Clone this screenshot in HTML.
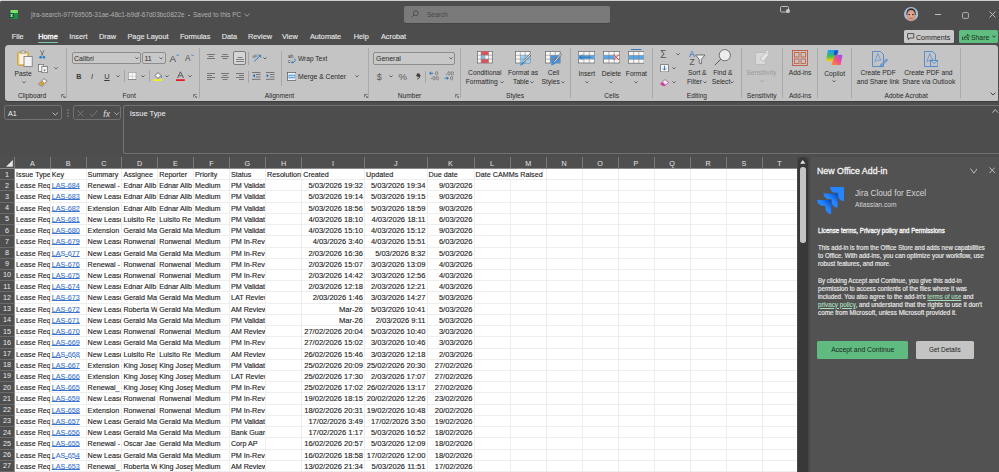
<!DOCTYPE html><html><head><meta charset="utf-8"><style>
html,body{margin:0;padding:0;}
body{width:999px;height:472px;overflow:hidden;position:relative;background:#4d4d4d;font-family:"Liberation Sans",sans-serif;}
.t{position:absolute;white-space:nowrap;}
.r{position:absolute;}
.c{position:absolute;overflow:hidden;white-space:nowrap;font-size:7.2px;line-height:11.22px;color:#1a1a1a;-webkit-text-stroke:0.12px #1a1a1a;}
</style></head><body>
<div class="r" style="left:0.00px;top:0.00px;width:999.00px;height:1.00px;background:#cfcfcf;"></div>
<svg class="r" style="left:0.00px;top:0.00px;width:3.00px;height:3.00px" viewBox="0 0 3 3"><path d="M0 0 H3 Q0 0 0 3Z" fill="#e6e6e6"/></svg>
<svg class="r" style="left:9.00px;top:9.50px;width:9.00px;height:9.50px" viewBox="0 0 9 9.5"><rect x="1.5" y="0" width="7.5" height="9.5" rx="1" fill="#1e8e47"/><rect x="1.5" y="0" width="7.5" height="3" rx="1" fill="#7fe36b"/><rect x="0" y="3" width="5" height="5" rx="0.8" fill="#0d5c2c"/><text x="2.5" y="7" font-size="4.5" fill="#fff" text-anchor="middle" font-family="Liberation Sans" font-weight="bold">x</text></svg>
<div class="t" style="left:31.20px;top:12.46px;font-size:6.90px;line-height:6.90px;color:#b0b0b0;transform:scaleX(0.9390);transform-origin:0 50%;">jira-search-97769505-31ae-48c1-b9df-67d03bc0822e</div>
<div class="r" style="left:188.40px;top:14.50px;width:1.80px;height:1.80px;background:#b0b0b0;border-radius:50%;"></div>
<div class="t" style="left:193.10px;top:12.46px;font-size:6.90px;line-height:6.90px;color:#b0b0b0;transform:scaleX(0.9399);transform-origin:0 50%;">Saved to this PC</div>
<svg class="r" style="left:244.00px;top:13.00px;width:6.00px;height:4.00px" viewBox="0 0 6 4"><path d="M0.5 0.8 L3 3.2 L5.5 0.8" stroke="#a9a9a9" stroke-width="0.9" fill="none"/></svg>
<div class="r" style="left:404.00px;top:5.70px;width:205.60px;height:17.20px;background:#7a7a7a;border-radius:2px;box-shadow:0 0.6px 0 #3f3f3f;"></div>
<svg class="r" style="left:410.50px;top:10.00px;width:8.00px;height:8.00px" viewBox="0 0 8 8"><circle cx="4.8" cy="3.2" r="2.4" stroke="#4a4a4a" stroke-width="0.9" fill="none"/><path d="M3.1 4.9 L0.8 7.2" stroke="#4a4a4a" stroke-width="0.9"/></svg>
<div class="t" style="left:427.00px;top:11.66px;font-size:6.90px;line-height:6.90px;color:#474747;transform:scaleX(0.9377);transform-origin:0 50%;">Search</div>
<svg class="r" style="left:780.00px;top:6.00px;width:10.00px;height:7.00px" viewBox="0 0 10 7"><rect x="0.5" y="0.5" width="8" height="5.5" rx="1" stroke="#c9c9c9" stroke-width="0.9" fill="none"/><circle cx="8" cy="5" r="2" fill="#c9c9c9"/></svg>
<svg class="r" style="left:903.90px;top:7.40px;width:14.20px;height:14.20px" viewBox="0 0 14.2 14.2"><defs><clipPath id="av"><circle cx="7.1" cy="7.1" r="7.1"/></clipPath><radialGradient id="avf" cx="0.5" cy="0.45" r="0.6"><stop offset="0" stop-color="#e6b09a"/><stop offset="1" stop-color="#c98a74"/></radialGradient></defs><circle cx="7.1" cy="7.1" r="7.1" fill="#a3c0de"/><g clip-path="url(#av)"><ellipse cx="7.1" cy="8.6" rx="4.5" ry="6.2" fill="url(#avf)"/><path d="M2.4 8 Q2 1.4 7.1 1.2 Q12.2 1.4 11.8 8 L11 8 Q11 3 7.1 3 Q3.2 3 3.2 8Z" fill="#3a2a24"/><ellipse cx="5.3" cy="7.6" rx="0.9" ry="0.6" fill="#2a1e1c"/><ellipse cx="8.9" cy="7.6" rx="0.9" ry="0.6" fill="#2a1e1c"/><ellipse cx="7.1" cy="11" rx="1.7" ry="0.6" fill="#b0625a"/></g></svg>
<div class="r" style="left:934.60px;top:14.00px;width:6.40px;height:0.80px;background:#bdbdbd;"></div>
<svg class="r" style="left:961.50px;top:11.50px;width:7.00px;height:7.00px" viewBox="0 0 7 7"><rect x="0.6" y="0.6" width="5.8" height="5.8" rx="1" stroke="#bdbdbd" stroke-width="0.9" fill="none"/></svg>
<svg class="r" style="left:988.50px;top:11.30px;width:7.00px;height:7.00px" viewBox="0 0 7 7"><path d="M0.5 0.5 L6.5 6.5 M6.5 0.5 L0.5 6.5" stroke="#c4c4c4" stroke-width="0.9"/></svg>
<div class="t" style="left:-82.30px;width:200px;text-align:center;top:33.11px;font-size:7.30px;line-height:7.30px;color:#e8e8e8;-webkit-text-stroke:0.12px #e8e8e8;">File</div>
<div class="t" style="left:-52.00px;width:200px;text-align:center;top:33.11px;font-size:7.30px;line-height:7.30px;color:#f0f0f0;-webkit-text-stroke:0.4px #f0f0f0;">Home</div>
<div class="t" style="left:-21.60px;width:200px;text-align:center;top:33.11px;font-size:7.30px;line-height:7.30px;color:#e8e8e8;-webkit-text-stroke:0.12px #e8e8e8;">Insert</div>
<div class="t" style="left:7.50px;width:200px;text-align:center;top:33.11px;font-size:7.30px;line-height:7.30px;color:#e8e8e8;-webkit-text-stroke:0.12px #e8e8e8;">Draw</div>
<div class="t" style="left:48.00px;width:200px;text-align:center;top:33.11px;font-size:7.30px;line-height:7.30px;color:#e8e8e8;-webkit-text-stroke:0.12px #e8e8e8;">Page Layout</div>
<div class="t" style="left:95.10px;width:200px;text-align:center;top:33.11px;font-size:7.30px;line-height:7.30px;color:#e8e8e8;-webkit-text-stroke:0.12px #e8e8e8;">Formulas</div>
<div class="t" style="left:129.35px;width:200px;text-align:center;top:33.11px;font-size:7.30px;line-height:7.30px;color:#e8e8e8;-webkit-text-stroke:0.12px #e8e8e8;">Data</div>
<div class="t" style="left:160.00px;width:200px;text-align:center;top:33.11px;font-size:7.30px;line-height:7.30px;color:#e8e8e8;-webkit-text-stroke:0.12px #e8e8e8;">Review</div>
<div class="t" style="left:189.95px;width:200px;text-align:center;top:33.11px;font-size:7.30px;line-height:7.30px;color:#e8e8e8;-webkit-text-stroke:0.12px #e8e8e8;">View</div>
<div class="t" style="left:225.50px;width:200px;text-align:center;top:33.11px;font-size:7.30px;line-height:7.30px;color:#e8e8e8;-webkit-text-stroke:0.12px #e8e8e8;">Automate</div>
<div class="t" style="left:261.30px;width:200px;text-align:center;top:33.11px;font-size:7.30px;line-height:7.30px;color:#e8e8e8;-webkit-text-stroke:0.12px #e8e8e8;">Help</div>
<div class="t" style="left:293.55px;width:200px;text-align:center;top:33.11px;font-size:7.30px;line-height:7.30px;color:#e8e8e8;-webkit-text-stroke:0.12px #e8e8e8;">Acrobat</div>
<div class="r" style="left:37.60px;top:41.90px;width:20.80px;height:1.20px;background:#7cc9a1;border-radius:1px;"></div>
<div class="r" style="left:903.80px;top:30.00px;width:50.10px;height:12.60px;background:#c8c8c8;border-radius:1.5px;"></div>
<svg class="r" style="left:907.00px;top:32.50px;width:7.50px;height:7.50px" viewBox="0 0 7.5 7.5"><path d="M0.6 0.6 H6.8 V5 H3 L1.4 6.6 V5 H0.6 Z" stroke="#333" stroke-width="0.8" fill="none"/></svg>
<div class="t" style="left:915.60px;top:33.61px;font-size:7.30px;line-height:7.30px;color:#262626;transform:scaleX(0.9691);transform-origin:0 50%;">Comments</div>
<div class="r" style="left:958.80px;top:30.00px;width:39.20px;height:12.60px;background:#5fbd7f;border-radius:1.5px;"></div>
<svg class="r" style="left:961.50px;top:32.50px;width:8.00px;height:7.50px" viewBox="0 0 8 7.5"><path d="M0.6 3.5 V7 H6.5 V5.5" stroke="#1f3a28" stroke-width="0.8" fill="none"/><path d="M2 5.5 Q2.5 2.5 5.5 2.5 V1 L7.5 3.2 L5.5 5.4 V4 Q3.5 4 2 5.5Z" stroke="#1f3a28" stroke-width="0.7" fill="none"/></svg>
<div class="t" style="left:970.60px;top:33.61px;font-size:7.30px;line-height:7.30px;color:#1b2f22;transform:scaleX(0.9344);transform-origin:0 50%;">Share</div>
<svg class="r" style="left:992.00px;top:35.00px;width:4.00px;height:3.00px" viewBox="0 0 4 3"><path d="M0.3 0.5 L2 2.3 L3.7 0.5" stroke="#1b2f22" stroke-width="0.8" fill="none"/></svg>
<div class="r" style="left:4.50px;top:44.50px;width:993.90px;height:56.70px;background:#c4c4c4;border-radius:3.5px 3.5px 1px 3px;box-shadow:0 0.8px 0 #383838;"></div>
<div class="r" style="left:66.30px;top:48.00px;width:0.90px;height:50.00px;background:#a9a9a9;"></div>
<div class="r" style="left:199.10px;top:48.00px;width:0.90px;height:50.00px;background:#a9a9a9;"></div>
<div class="r" style="left:368.40px;top:48.00px;width:0.90px;height:50.00px;background:#a9a9a9;"></div>
<div class="r" style="left:459.60px;top:48.00px;width:0.90px;height:50.00px;background:#a9a9a9;"></div>
<div class="r" style="left:570.30px;top:48.00px;width:0.90px;height:50.00px;background:#a9a9a9;"></div>
<div class="r" style="left:652.30px;top:48.00px;width:0.90px;height:50.00px;background:#a9a9a9;"></div>
<div class="r" style="left:740.50px;top:48.00px;width:0.90px;height:50.00px;background:#a9a9a9;"></div>
<div class="r" style="left:782.10px;top:48.00px;width:0.90px;height:50.00px;background:#a9a9a9;"></div>
<div class="r" style="left:817.20px;top:48.00px;width:0.90px;height:50.00px;background:#a9a9a9;"></div>
<div class="r" style="left:851.10px;top:48.00px;width:0.90px;height:50.00px;background:#a9a9a9;"></div>
<div class="r" style="left:960.10px;top:48.00px;width:0.90px;height:50.00px;background:#a9a9a9;"></div>
<div class="t" style="left:-67.90px;width:200px;text-align:center;top:92.68px;font-size:6.60px;line-height:6.60px;color:#2b2b2b;">Clipboard</div>
<svg class="r" style="left:61.00px;top:93.50px;width:4.50px;height:4.50px" viewBox="0 0 4.5 4.5"><path d="M0.4 3.5 V0.4 H3.5" stroke="#555" stroke-width="0.7" fill="none"/><path d="M1.3 1.3 L4 4 M4 2 V4 H2" stroke="#555" stroke-width="0.7" fill="none"/></svg>
<div class="t" style="left:29.15px;width:200px;text-align:center;top:92.68px;font-size:6.60px;line-height:6.60px;color:#2b2b2b;">Font</div>
<svg class="r" style="left:192.50px;top:93.50px;width:4.50px;height:4.50px" viewBox="0 0 4.5 4.5"><path d="M0.4 3.5 V0.4 H3.5" stroke="#555" stroke-width="0.7" fill="none"/><path d="M1.3 1.3 L4 4 M4 2 V4 H2" stroke="#555" stroke-width="0.7" fill="none"/></svg>
<div class="t" style="left:179.50px;width:200px;text-align:center;top:92.68px;font-size:6.60px;line-height:6.60px;color:#2b2b2b;">Alignment</div>
<svg class="r" style="left:363.50px;top:93.50px;width:4.50px;height:4.50px" viewBox="0 0 4.5 4.5"><path d="M0.4 3.5 V0.4 H3.5" stroke="#555" stroke-width="0.7" fill="none"/><path d="M1.3 1.3 L4 4 M4 2 V4 H2" stroke="#555" stroke-width="0.7" fill="none"/></svg>
<div class="t" style="left:309.55px;width:200px;text-align:center;top:92.68px;font-size:6.60px;line-height:6.60px;color:#2b2b2b;">Number</div>
<svg class="r" style="left:454.50px;top:93.50px;width:4.50px;height:4.50px" viewBox="0 0 4.5 4.5"><path d="M0.4 3.5 V0.4 H3.5" stroke="#555" stroke-width="0.7" fill="none"/><path d="M1.3 1.3 L4 4 M4 2 V4 H2" stroke="#555" stroke-width="0.7" fill="none"/></svg>
<div class="t" style="left:415.05px;width:200px;text-align:center;top:92.68px;font-size:6.60px;line-height:6.60px;color:#2b2b2b;">Styles</div>
<div class="t" style="left:511.70px;width:200px;text-align:center;top:92.68px;font-size:6.60px;line-height:6.60px;color:#2b2b2b;">Cells</div>
<div class="t" style="left:596.95px;width:200px;text-align:center;top:92.68px;font-size:6.60px;line-height:6.60px;color:#2b2b2b;">Editing</div>
<div class="t" style="left:661.70px;width:200px;text-align:center;top:92.68px;font-size:6.60px;line-height:6.60px;color:#2b2b2b;">Sensitivity</div>
<div class="t" style="left:700.10px;width:200px;text-align:center;top:92.68px;font-size:6.60px;line-height:6.60px;color:#2b2b2b;">Add-ins</div>
<div class="t" style="left:806.15px;width:200px;text-align:center;top:92.68px;font-size:6.60px;line-height:6.60px;color:#2b2b2b;">Adobe Acrobat</div>
<svg class="r" style="left:989.50px;top:91.50px;width:6.00px;height:4.00px" viewBox="0 0 6 4"><path d="M0.5 0.6 L3 3 L5.5 0.6" stroke="#333" stroke-width="0.9" fill="none"/></svg>
<svg class="r" style="left:16.50px;top:49.50px;width:16.00px;height:17.00px" viewBox="0 0 16 17"><rect x="0.8" y="2.2" width="10.5" height="13" rx="1" fill="#f2d48a" stroke="#c8961e" stroke-width="0.9"/><rect x="2.5" y="3.5" width="7" height="10.5" fill="#fbf3dd"/><path d="M3.5 3.2 L4.2 1.2 H5 Q6 -0.2 7 1.2 H7.8 L8.5 3.2Z" fill="#eee" stroke="#777" stroke-width="0.7"/><rect x="7" y="6.5" width="8.2" height="10" fill="#f4f4f4" stroke="#777" stroke-width="0.8"/></svg>
<div class="t" style="left:-76.95px;width:200px;text-align:center;top:70.84px;font-size:6.70px;line-height:6.70px;color:#2b2b2b;">Paste</div>
<svg class="r" style="left:21.50px;top:80.70px;width:4.00px;height:2.60px" viewBox="0 0 4 2.6"><path d="M0.4 0.4 L2 2 L3.6 0.4" stroke="#444" stroke-width="0.75" fill="none"/></svg>
<svg class="r" style="left:39.40px;top:49.60px;width:6.50px;height:9.00px" viewBox="0 0 6.5 9"><path d="M1.3 0.3 L4.2 5.6 M5.2 0.3 L2.3 5.6" stroke="#555" stroke-width="0.7"/><circle cx="1.6" cy="7.2" r="1.3" fill="#1f78c8"/><circle cx="4.9" cy="7.2" r="1.3" fill="#1f78c8"/></svg>
<svg class="r" style="left:38.00px;top:63.60px;width:10.00px;height:9.00px" viewBox="0 0 10 9"><rect x="0.5" y="0.5" width="5" height="7" fill="#f4f4f4" stroke="#666" stroke-width="0.7"/><rect x="3.8" y="2.5" width="5.5" height="6.2" fill="#f4f4f4" stroke="#666" stroke-width="0.7"/><path d="M6.5 5 V7.5 M5.3 6.2 H7.7" stroke="#555" stroke-width="0.5"/></svg>
<svg class="r" style="left:53.50px;top:67.30px;width:4.00px;height:2.60px" viewBox="0 0 4 2.6"><path d="M0.4 0.4 L2 2 L3.6 0.4" stroke="#444" stroke-width="0.75" fill="none"/></svg>
<svg class="r" style="left:38.20px;top:78.00px;width:9.50px;height:9.00px" viewBox="0 0 9.5 9"><path d="M6 0.5 L9 3.2 L4.2 8.3 L0.5 6.2Z" fill="#f4f4f4" stroke="#555" stroke-width="0.7"/><path d="M1.2 5.5 L4.6 2.8 L6.7 5 L4 7.8Z" fill="#d49a2a"/></svg>
<div class="r" style="left:71.70px;top:51.50px;width:69.00px;height:12.90px;background:#c8c8c8;border:0.8px solid #8d8d8d;border-radius:2px;box-sizing:border-box;"></div>
<div class="t" style="left:74.00px;top:55.22px;font-size:7.00px;line-height:7.00px;color:#2a2a2a;">Calibri</div>
<svg class="r" style="left:134.50px;top:56.90px;width:4.00px;height:2.60px" viewBox="0 0 4 2.6"><path d="M0.4 0.4 L2 2 L3.6 0.4" stroke="#444" stroke-width="0.75" fill="none"/></svg>
<div class="r" style="left:142.40px;top:51.50px;width:23.20px;height:12.90px;background:#c8c8c8;border:0.8px solid #8d8d8d;border-radius:2px;box-sizing:border-box;"></div>
<div class="t" style="left:144.50px;top:55.22px;font-size:7.00px;line-height:7.00px;color:#2a2a2a;">11</div>
<svg class="r" style="left:159.30px;top:56.90px;width:4.00px;height:2.60px" viewBox="0 0 4 2.6"><path d="M0.4 0.4 L2 2 L3.6 0.4" stroke="#444" stroke-width="0.75" fill="none"/></svg>
<div class="t" style="left:169.60px;top:53.51px;font-size:9.80px;line-height:9.80px;color:#4a4a4a;">A</div>
<svg class="r" style="left:176.00px;top:53.50px;width:3.50px;height:2.50px" viewBox="0 0 3.5 2.5"><path d="M0.3 2.2 L1.7 0.5 L3.1 2.2" stroke="#2f75c0" stroke-width="0.7" fill="none"/></svg>
<div class="t" style="left:185.00px;top:54.95px;font-size:8.20px;line-height:8.20px;color:#4a4a4a;">A</div>
<svg class="r" style="left:190.50px;top:53.50px;width:3.50px;height:2.50px" viewBox="0 0 3.5 2.5"><path d="M0.3 0.5 L1.7 2.2 L3.1 0.5" stroke="#2f75c0" stroke-width="0.7" fill="none"/></svg>
<div class="t" style="left:76.20px;top:72.75px;font-size:7.20px;line-height:7.20px;color:#3a3a3a;font-weight:bold;">B</div>
<div class="t" style="left:90.90px;top:72.63px;font-size:7.50px;line-height:7.50px;color:#3a3a3a;font-style:italic;font-family:"Liberation Serif",serif;">I</div>
<div class="t" style="left:104.20px;top:72.63px;font-size:7.50px;line-height:7.50px;color:#3a3a3a;text-decoration:underline;">U</div>
<svg class="r" style="left:116.00px;top:74.50px;width:4.00px;height:2.60px" viewBox="0 0 4 2.6"><path d="M0.4 0.4 L2 2 L3.6 0.4" stroke="#444" stroke-width="0.75" fill="none"/></svg>
<div class="r" style="left:124.20px;top:70.00px;width:0.80px;height:12.00px;background:#a5a5a5;"></div>
<svg class="r" style="left:128.00px;top:71.50px;width:8.50px;height:8.50px" viewBox="0 0 8.5 8.5"><rect x="0.5" y="0.5" width="7.5" height="7.5" fill="#f6f6f6" stroke="#9a9a9a" stroke-width="0.6"/><path d="M4.25 0.5 V8 M0.5 4.25 H8" stroke="#b9b9b9" stroke-width="0.5"/><path d="M0.3 8 H8.2" stroke="#444" stroke-width="1"/></svg>
<svg class="r" style="left:140.80px;top:74.50px;width:4.00px;height:2.60px" viewBox="0 0 4 2.6"><path d="M0.4 0.4 L2 2 L3.6 0.4" stroke="#444" stroke-width="0.75" fill="none"/></svg>
<div class="r" style="left:148.60px;top:70.00px;width:0.80px;height:12.00px;background:#a5a5a5;"></div>
<svg class="r" style="left:152.60px;top:70.50px;width:9.50px;height:10.50px" viewBox="0 0 9.5 10.5"><path d="M2 4.5 L5 1.5 L8 4.5 L5 7.5Z" fill="#f4f4f4" stroke="#444" stroke-width="0.7"/><path d="M8.2 4.8 Q9 6.5 8.2 7" stroke="#2f75c0" stroke-width="0.8" fill="none"/><rect x="0" y="8.2" width="9.2" height="1.9" fill="#f5ec18"/></svg>
<svg class="r" style="left:165.30px;top:74.50px;width:4.00px;height:2.60px" viewBox="0 0 4 2.6"><path d="M0.4 0.4 L2 2 L3.6 0.4" stroke="#444" stroke-width="0.75" fill="none"/></svg>
<svg class="r" style="left:175.50px;top:70.50px;width:9.00px;height:10.50px" viewBox="0 0 9 10.5"><path d="M1.5 7 L4.5 0.8 L7.5 7 M2.7 4.8 H6.3" stroke="#444" stroke-width="0.8" fill="none"/><rect x="0" y="8.2" width="8.8" height="1.9" fill="#e51c23"/></svg>
<svg class="r" style="left:188.40px;top:74.50px;width:4.00px;height:2.60px" viewBox="0 0 4 2.6"><path d="M0.4 0.4 L2 2 L3.6 0.4" stroke="#444" stroke-width="0.75" fill="none"/></svg>
<svg class="r" style="left:206.70px;top:53.50px;width:9.00px;height:7.30px" viewBox="0 0 9 7.300000000000001"><rect x="0" y="0.0" width="8" height="0.7" fill="#555"/><rect x="1.5" y="2.1" width="5" height="0.7" fill="#555"/><rect x="0" y="4.2" width="8" height="0.7" fill="#555"/></svg>
<svg class="r" style="left:221.00px;top:53.50px;width:9.00px;height:7.30px" viewBox="0 0 9 7.300000000000001"><rect x="1.5" y="0.0" width="5" height="0.7" fill="#555"/><rect x="0" y="2.1" width="8" height="0.7" fill="#555"/><rect x="1.5" y="4.2" width="5" height="0.7" fill="#555"/></svg>
<div class="r" style="left:233.20px;top:51.40px;width:13.20px;height:13.70px;background:#d6d6d6;border:0.8px solid #7d7d7d;border-radius:2px;box-sizing:border-box;"></div>
<svg class="r" style="left:235.80px;top:56.50px;width:9.00px;height:7.30px" viewBox="0 0 9 7.300000000000001"><rect x="1.5" y="0.0" width="5" height="0.7" fill="#555"/><rect x="0" y="2.1" width="8" height="0.7" fill="#555"/><rect x="0" y="4.2" width="8" height="0.7" fill="#555"/></svg>
<div class="r" style="left:248.40px;top:52.00px;width:0.80px;height:13.00px;background:#a5a5a5;"></div>
<div class="r" style="left:280.80px;top:51.00px;width:0.80px;height:34.50px;background:#a9a9a9;"></div>
<svg class="r" style="left:251.80px;top:52.50px;width:10.00px;height:10.00px" viewBox="0 0 10 10"><text x="0.5" y="4.5" font-size="4.5" fill="#555" font-family="Liberation Sans" transform="rotate(-20 3 4)">ab</text><path d="M2 8.5 L8.5 2.5" stroke="#1f6fc0" stroke-width="0.9"/><path d="M6.2 2.2 H8.8 V4.8" stroke="#1f6fc0" stroke-width="0.8" fill="none"/></svg>
<svg class="r" style="left:263.30px;top:57.20px;width:4.00px;height:2.60px" viewBox="0 0 4 2.6"><path d="M0.4 0.4 L2 2 L3.6 0.4" stroke="#444" stroke-width="0.75" fill="none"/></svg>
<svg class="r" style="left:206.70px;top:72.50px;width:9.00px;height:9.00px" viewBox="0 0 9 9.0"><rect x="0" y="0.0" width="8" height="0.7" fill="#555"/><rect x="0" y="2.0" width="5" height="0.7" fill="#555"/><rect x="0" y="4.0" width="8" height="0.7" fill="#555"/><rect x="0" y="6.0" width="5" height="0.7" fill="#555"/></svg>
<svg class="r" style="left:221.00px;top:72.50px;width:9.00px;height:9.00px" viewBox="0 0 9 9.0"><rect x="0" y="0.0" width="8" height="0.7" fill="#555"/><rect x="1.5" y="2.0" width="5" height="0.7" fill="#555"/><rect x="0" y="4.0" width="8" height="0.7" fill="#555"/><rect x="1.5" y="6.0" width="5" height="0.7" fill="#555"/></svg>
<svg class="r" style="left:235.50px;top:72.50px;width:9.00px;height:9.00px" viewBox="0 0 9 9.0"><rect x="0" y="0.0" width="8" height="0.7" fill="#555"/><rect x="3" y="2.0" width="5" height="0.7" fill="#555"/><rect x="0" y="4.0" width="8" height="0.7" fill="#555"/><rect x="3" y="6.0" width="5" height="0.7" fill="#555"/></svg>
<div class="r" style="left:247.50px;top:71.00px;width:0.80px;height:12.00px;background:#a5a5a5;"></div>
<svg class="r" style="left:251.80px;top:72.00px;width:9.00px;height:8.00px" viewBox="0 0 9 8"><rect x="0" y="0" width="8.5" height="0.7" fill="#555"/><rect x="4" y="2.3" width="4.5" height="0.7" fill="#555"/><rect x="4" y="4.6" width="4.5" height="0.7" fill="#555"/><rect x="0" y="6.9" width="8.5" height="0.7" fill="#555"/><path d="M3 2 L0.6 3.8 L3 5.6Z" fill="#1f6fc0"/></svg>
<svg class="r" style="left:266.20px;top:72.00px;width:9.00px;height:8.00px" viewBox="0 0 9 8"><rect x="0" y="0" width="8.5" height="0.7" fill="#555"/><rect x="4" y="2.3" width="4.5" height="0.7" fill="#555"/><rect x="4" y="4.6" width="4.5" height="0.7" fill="#555"/><rect x="0" y="6.9" width="8.5" height="0.7" fill="#555"/><path d="M0.6 2 L3 3.8 L0.6 5.6Z" fill="#1f6fc0"/></svg>
<svg class="r" style="left:287.80px;top:53.50px;width:9.00px;height:10.00px" viewBox="0 0 9 10"><text x="0" y="4" font-size="4.8" fill="#444" font-family="Liberation Sans">ab</text><text x="0" y="9" font-size="4.8" fill="#444" font-family="Liberation Sans">c</text><path d="M6.5 4.5 Q8.5 6.5 6 8.3 H3.5" stroke="#1f6fc0" stroke-width="0.8" fill="none"/><path d="M4.8 7.2 L3.4 8.3 L4.8 9.4" stroke="#1f6fc0" stroke-width="0.7" fill="none"/></svg>
<div class="t" style="left:298.00px;top:56.19px;font-size:6.59px;line-height:6.59px;color:#2a2a2a;">Wrap Text</div>
<svg class="r" style="left:286.90px;top:71.70px;width:9.50px;height:9.00px" viewBox="0 0 9.5 9"><rect x="0.4" y="0.4" width="8.6" height="8.2" fill="#eaf2fb" stroke="#555" stroke-width="0.7"/><rect x="1.5" y="2.7" width="6.4" height="3.6" fill="#5aa0e6"/><path d="M2.5 4.5 H7 M3.3 3.6 L2.4 4.5 L3.3 5.4 M6.1 3.6 L7 4.5 L6.1 5.4" stroke="#fff" stroke-width="0.6" fill="none"/></svg>
<div class="t" style="left:298.00px;top:73.50px;font-size:6.80px;line-height:6.80px;color:#2a2a2a;">Merge &amp; Center</div>
<svg class="r" style="left:355.20px;top:75.10px;width:4.00px;height:2.60px" viewBox="0 0 4 2.6"><path d="M0.4 0.4 L2 2 L3.6 0.4" stroke="#444" stroke-width="0.75" fill="none"/></svg>
<div class="r" style="left:373.30px;top:51.50px;width:81.40px;height:13.10px;background:#c8c8c8;border:0.8px solid #8d8d8d;border-radius:2px;box-sizing:border-box;"></div>
<div class="t" style="left:376.00px;top:55.22px;font-size:7.00px;line-height:7.00px;color:#2a2a2a;">General</div>
<svg class="r" style="left:449.30px;top:56.90px;width:4.00px;height:2.60px" viewBox="0 0 4 2.6"><path d="M0.4 0.4 L2 2 L3.6 0.4" stroke="#444" stroke-width="0.75" fill="none"/></svg>
<div class="t" style="left:376.80px;top:72.73px;font-size:9.00px;line-height:9.00px;color:#5a5a5a;">$</div>
<svg class="r" style="left:388.50px;top:75.20px;width:4.00px;height:2.60px" viewBox="0 0 4 2.6"><path d="M0.4 0.4 L2 2 L3.6 0.4" stroke="#444" stroke-width="0.75" fill="none"/></svg>
<div class="t" style="left:398.60px;top:72.49px;font-size:9.60px;line-height:9.60px;color:#606060;">%</div>
<svg class="r" style="left:416.20px;top:73.30px;width:4.50px;height:6.50px" viewBox="0 0 4.5 6.5"><circle cx="2.3" cy="2.2" r="1.9" fill="#444"/><path d="M4 2.5 Q4 5.2 1.2 6.2" stroke="#444" stroke-width="1" fill="none"/></svg>
<div class="r" style="left:425.20px;top:70.50px;width:0.80px;height:12.50px;background:#a5a5a5;"></div>
<svg class="r" style="left:429.30px;top:71.30px;width:10.00px;height:9.50px" viewBox="0 0 10 9.5"><path d="M4.2 2.3 H0.8 M2.2 0.9 L0.7 2.3 L2.2 3.7" stroke="#1f6fc0" stroke-width="0.9" fill="none"/><ellipse cx="7.6" cy="2.3" rx="1.15" ry="1.75" fill="none" stroke="#666" stroke-width="0.65"/><circle cx="2.6" cy="7.6" r="0.5" fill="#666"/><ellipse cx="5.0" cy="7.2" rx="1.15" ry="1.75" fill="none" stroke="#666" stroke-width="0.65"/><ellipse cx="8.3" cy="7.2" rx="1.15" ry="1.75" fill="none" stroke="#666" stroke-width="0.65"/></svg>
<svg class="r" style="left:443.90px;top:71.30px;width:10.00px;height:9.50px" viewBox="0 0 10 9.5"><ellipse cx="5.0" cy="2.3" rx="1.15" ry="1.75" fill="none" stroke="#666" stroke-width="0.65"/><ellipse cx="8.3" cy="2.3" rx="1.15" ry="1.75" fill="none" stroke="#666" stroke-width="0.65"/><circle cx="2.6" cy="3.6" r="0.5" fill="#666"/><path d="M0.6 7.2 H4.2 M2.8 5.8 L4.3 7.2 L2.8 8.6" stroke="#1f6fc0" stroke-width="0.9" fill="none"/><ellipse cx="7.6" cy="7.2" rx="1.15" ry="1.75" fill="none" stroke="#666" stroke-width="0.65"/></svg>
<svg class="r" style="left:477.20px;top:51.20px;width:15.70px;height:12.40px" viewBox="0 0 15.7 12.4"><rect x="0.4" y="0.4" width="14.899999999999999" height="11.6" fill="#f7f7f7" stroke="#666" stroke-width="0.7"/><rect x="4.125" y="0.4" width="7.449999999999999" height="3.8666666666666667" fill="#e2505a"/><rect x="4.125" y="4.266666666666667" width="3.7249999999999996" height="3.8666666666666667" fill="#7cc0ee"/><rect x="7.85" y="4.266666666666667" width="3.7249999999999996" height="3.8666666666666667" fill="#f5f5f5"/><rect x="4.125" y="8.133333333333333" width="7.449999999999999" height="3.8666666666666667" fill="#e2505a"/><path d="M4.125 0.4 V12.0" stroke="#777" stroke-width="0.5"/><path d="M7.85 0.4 V12.0" stroke="#777" stroke-width="0.5"/><path d="M11.575 0.4 V12.0" stroke="#777" stroke-width="0.5"/><path d="M0.4 4.266666666666667 H15.299999999999999" stroke="#777" stroke-width="0.5"/><path d="M0.4 8.133333333333333 H15.299999999999999" stroke="#777" stroke-width="0.5"/></svg>
<div class="t" style="left:384.85px;width:200px;text-align:center;top:70.24px;font-size:6.70px;line-height:6.70px;color:#2a2a2a;">Conditional</div>
<div class="t" style="left:381.65px;width:200px;text-align:center;top:79.44px;font-size:6.70px;line-height:6.70px;color:#2a2a2a;">Formatting</div>
<svg class="r" style="left:500.00px;top:80.70px;width:4.00px;height:2.60px" viewBox="0 0 4 2.6"><path d="M0.4 0.4 L2 2 L3.6 0.4" stroke="#444" stroke-width="0.75" fill="none"/></svg>
<svg class="r" style="left:515.40px;top:51.20px;width:17.00px;height:15.00px" viewBox="0 0 17 15"><rect x="0.4" y="0.4" width="14.7" height="11.6" fill="#f7f7f7" stroke="#666" stroke-width="0.7"/><rect x="5.3" y="4.266666666666667" width="9.799999999999999" height="7.733333333333333" fill="#9cd0f5"/><path d="M5.3 0.4 V12.0" stroke="#777" stroke-width="0.5"/><path d="M10.2 0.4 V12.0" stroke="#777" stroke-width="0.5"/><path d="M0.4 4.266666666666667 H15.1" stroke="#777" stroke-width="0.5"/><path d="M0.4 8.133333333333333 H15.1" stroke="#777" stroke-width="0.5"/><path d="M15.5 3.5 L8 11.5" stroke="#555" stroke-width="1.8"/><path d="M15.5 3.5 L8 11.5" stroke="#f4f4f4" stroke-width="1"/><path d="M8.3 10.8 Q6 11 5 14.5 Q8.5 14 9.5 12Z" fill="#3b8fd9"/></svg>
<div class="t" style="left:423.10px;width:200px;text-align:center;top:70.24px;font-size:6.70px;line-height:6.70px;color:#2a2a2a;">Format as</div>
<div class="t" style="left:421.05px;width:200px;text-align:center;top:79.44px;font-size:6.70px;line-height:6.70px;color:#2a2a2a;">Table</div>
<svg class="r" style="left:529.50px;top:80.70px;width:4.00px;height:2.60px" viewBox="0 0 4 2.6"><path d="M0.4 0.4 L2 2 L3.6 0.4" stroke="#444" stroke-width="0.75" fill="none"/></svg>
<svg class="r" style="left:545.30px;top:51.20px;width:17.50px;height:15.00px" viewBox="0 0 17.5 15"><rect x="0.4" y="0.4" width="14.7" height="11.6" fill="#f7f7f7" stroke="#666" stroke-width="0.7"/><rect x="5.3" y="4.266666666666667" width="9.799999999999999" height="7.733333333333333" fill="#4a93dc"/><path d="M5.3 0.4 V12.0" stroke="#777" stroke-width="0.5"/><path d="M10.2 0.4 V12.0" stroke="#777" stroke-width="0.5"/><path d="M0.4 4.266666666666667 H15.1" stroke="#777" stroke-width="0.5"/><path d="M0.4 8.133333333333333 H15.1" stroke="#777" stroke-width="0.5"/><path d="M16.5 2.5 L9 11.5" stroke="#555" stroke-width="1.8"/><path d="M16.5 2.5 L9 11.5" stroke="#f4f4f4" stroke-width="1"/><path d="M9.3 10.8 Q7 11 6 14.5 Q9.5 14 10.5 12Z" fill="#3b8fd9"/></svg>
<div class="t" style="left:453.50px;width:200px;text-align:center;top:70.24px;font-size:6.70px;line-height:6.70px;color:#2a2a2a;">Cell</div>
<div class="t" style="left:450.70px;width:200px;text-align:center;top:79.44px;font-size:6.70px;line-height:6.70px;color:#2a2a2a;">Styles</div>
<svg class="r" style="left:560.50px;top:80.70px;width:4.00px;height:2.60px" viewBox="0 0 4 2.6"><path d="M0.4 0.4 L2 2 L3.6 0.4" stroke="#444" stroke-width="0.75" fill="none"/></svg>
<svg class="r" style="left:578.30px;top:51.20px;width:17.20px;height:12.40px" viewBox="0 0 17.2 12.4"><rect x="0.4" y="0.4" width="16.4" height="11.6" fill="#f7f7f7" stroke="#666" stroke-width="0.7"/><rect x="0.4" y="4.266666666666667" width="16.4" height="3.8666666666666667" fill="#5aa7e8"/><path d="M5.866666666666666 0.4 V12.0" stroke="#777" stroke-width="0.5"/><path d="M11.333333333333332 0.4 V12.0" stroke="#777" stroke-width="0.5"/><path d="M0.4 4.266666666666667 H16.8" stroke="#777" stroke-width="0.5"/><path d="M0.4 8.133333333333333 H16.8" stroke="#777" stroke-width="0.5"/><path d="M13 6.2 H2 M4.5 3.9 L1.5 6.2 L4.5 8.5" stroke="#1f6fc0" stroke-width="0.9" fill="none"/></svg>
<div class="t" style="left:486.80px;width:200px;text-align:center;top:70.84px;font-size:6.70px;line-height:6.70px;color:#2a2a2a;">Insert</div>
<svg class="r" style="left:584.70px;top:80.70px;width:4.00px;height:2.60px" viewBox="0 0 4 2.6"><path d="M0.4 0.4 L2 2 L3.6 0.4" stroke="#444" stroke-width="0.75" fill="none"/></svg>
<svg class="r" style="left:603.10px;top:51.20px;width:17.20px;height:12.40px" viewBox="0 0 17.2 12.4"><rect x="0.4" y="0.4" width="16.4" height="11.6" fill="#f7f7f7" stroke="#666" stroke-width="0.7"/><rect x="0.4" y="4.266666666666667" width="10.933333333333332" height="3.8666666666666667" fill="#5aa7e8"/><path d="M5.866666666666666 0.4 V12.0" stroke="#777" stroke-width="0.5"/><path d="M11.333333333333332 0.4 V12.0" stroke="#777" stroke-width="0.5"/><path d="M0.4 4.266666666666667 H16.8" stroke="#777" stroke-width="0.5"/><path d="M0.4 8.133333333333333 H16.8" stroke="#777" stroke-width="0.5"/><path d="M10.5 3.5 L16 9 M16 3.5 L10.5 9" stroke="#d64545" stroke-width="1"/></svg>
<div class="t" style="left:511.40px;width:200px;text-align:center;top:70.84px;font-size:6.70px;line-height:6.70px;color:#2a2a2a;">Delete</div>
<svg class="r" style="left:609.40px;top:80.70px;width:4.00px;height:2.60px" viewBox="0 0 4 2.6"><path d="M0.4 0.4 L2 2 L3.6 0.4" stroke="#444" stroke-width="0.75" fill="none"/></svg>
<svg class="r" style="left:627.90px;top:49.00px;width:16.50px;height:14.60px" viewBox="0 0 16.5 14.6"><path d="M3 0.5 H13.5" stroke="#1f6fc0" stroke-width="0.9"/><g transform="translate(0 2.2)"><rect x="0.4" y="0.4" width="15.7" height="11.6" fill="#f7f7f7" stroke="#666" stroke-width="0.7"/><rect x="0.4" y="4.266666666666667" width="15.7" height="3.8666666666666667" fill="#5aa7e8"/><path d="M5.633333333333334 0.4 V12.0" stroke="#777" stroke-width="0.5"/><path d="M10.866666666666667 0.4 V12.0" stroke="#777" stroke-width="0.5"/><path d="M0.4 4.266666666666667 H16.1" stroke="#777" stroke-width="0.5"/><path d="M0.4 8.133333333333333 H16.1" stroke="#777" stroke-width="0.5"/></g></svg>
<div class="t" style="left:536.40px;width:200px;text-align:center;top:70.84px;font-size:6.70px;line-height:6.70px;color:#2a2a2a;">Format</div>
<svg class="r" style="left:634.20px;top:80.70px;width:4.00px;height:2.60px" viewBox="0 0 4 2.6"><path d="M0.4 0.4 L2 2 L3.6 0.4" stroke="#444" stroke-width="0.75" fill="none"/></svg>
<div class="t" style="left:660.30px;top:50.03px;font-size:10.00px;line-height:10.00px;color:#555;">&#931;</div>
<svg class="r" style="left:675.50px;top:52.90px;width:4.00px;height:2.60px" viewBox="0 0 4 2.6"><path d="M0.4 0.4 L2 2 L3.6 0.4" stroke="#444" stroke-width="0.75" fill="none"/></svg>
<svg class="r" style="left:659.70px;top:64.20px;width:9.00px;height:8.30px" viewBox="0 0 9 8.3"><rect x="0.4" y="0.4" width="8.2" height="7.5" rx="0.8" fill="#f4f4f4" stroke="#555" stroke-width="0.7"/><path d="M4.5 1.8 V6 M2.8 4.4 L4.5 6.1 L6.2 4.4" stroke="#1f6fc0" stroke-width="0.9" fill="none"/></svg>
<svg class="r" style="left:671.70px;top:67.00px;width:4.00px;height:2.60px" viewBox="0 0 4 2.6"><path d="M0.4 0.4 L2 2 L3.6 0.4" stroke="#444" stroke-width="0.75" fill="none"/></svg>
<svg class="r" style="left:659.70px;top:78.90px;width:9.00px;height:7.60px" viewBox="0 0 9 7.6"><path d="M0.5 5 L5 0.5 L8.5 3.5 L4 7.3Z" fill="#f4f4f4" stroke="#b52f89" stroke-width="0.7"/><path d="M0.5 5 L2.6 3 L5.6 5.8 L4 7.3Z" fill="#d0399e"/></svg>
<svg class="r" style="left:671.70px;top:81.40px;width:4.00px;height:2.60px" viewBox="0 0 4 2.6"><path d="M0.4 0.4 L2 2 L3.6 0.4" stroke="#444" stroke-width="0.75" fill="none"/></svg>
<svg class="r" style="left:688.80px;top:50.30px;width:17.00px;height:15.50px" viewBox="0 0 17 15.5"><text x="0" y="7" font-size="8.5" fill="#1f6fc0" font-family="Liberation Sans">A</text><text x="0.4" y="15.2" font-size="8.5" fill="#555" font-family="Liberation Sans">Z</text><path d="M6.5 5 H16 L12.3 9.3 V14 L10.2 13 V9.3Z" fill="#f2f2f2" stroke="#555" stroke-width="0.8"/></svg>
<div class="t" style="left:597.30px;width:200px;text-align:center;top:70.14px;font-size:6.70px;line-height:6.70px;color:#2a2a2a;">Sort &amp;</div>
<div class="t" style="left:594.45px;width:200px;text-align:center;top:79.44px;font-size:6.70px;line-height:6.70px;color:#2a2a2a;">Filter</div>
<svg class="r" style="left:703.00px;top:80.70px;width:4.00px;height:2.60px" viewBox="0 0 4 2.6"><path d="M0.4 0.4 L2 2 L3.6 0.4" stroke="#444" stroke-width="0.75" fill="none"/></svg>
<svg class="r" style="left:714.40px;top:49.20px;width:17.00px;height:17.00px" viewBox="0 0 17 17"><circle cx="10.8" cy="6.2" r="5.6" fill="#ececec" stroke="#555" stroke-width="0.8"/><path d="M6.8 10.2 L0.8 16.2" stroke="#555" stroke-width="0.9"/></svg>
<div class="t" style="left:622.85px;width:200px;text-align:center;top:70.14px;font-size:6.70px;line-height:6.70px;color:#2a2a2a;">Find &amp;</div>
<div class="t" style="left:621.00px;width:200px;text-align:center;top:79.44px;font-size:6.70px;line-height:6.70px;color:#2a2a2a;">Select</div>
<svg class="r" style="left:730.30px;top:80.70px;width:4.00px;height:2.60px" viewBox="0 0 4 2.6"><path d="M0.4 0.4 L2 2 L3.6 0.4" stroke="#444" stroke-width="0.75" fill="none"/></svg>
<svg class="r" style="left:755.30px;top:49.20px;width:15.50px;height:16.00px" viewBox="0 0 15.5 16"><rect x="0.5" y="3.5" width="10" height="12" rx="1" fill="#d9d9d9" stroke="#b3b3b3" stroke-width="0.7"/><path d="M5 10 L11 2.5 L14.5 5 L8.5 12.5Z" fill="#e4e4e4" stroke="#b3b3b3" stroke-width="0.7"/><circle cx="12.3" cy="2.8" r="1.6" fill="#e4e4e4" stroke="#b3b3b3" stroke-width="0.6"/></svg>
<div class="t" style="left:661.30px;width:200px;text-align:center;top:70.14px;font-size:6.70px;line-height:6.70px;color:#9a9a9a;">Sensitivity</div>
<svg class="r" style="left:759.70px;top:80.40px;width:4.00px;height:2.60px" viewBox="0 0 4 2.6"><path d="M0.4 0.4 L2 2 L3.6 0.4" stroke="#9a9a9a" stroke-width="0.75" fill="none"/></svg>
<svg class="r" style="left:792.10px;top:49.70px;width:16.00px;height:16.00px" viewBox="0 0 16 16"><rect x="0.5" y="0.5" width="15" height="15" fill="none" stroke="#c5573a" stroke-width="0.9"/><rect x="2.5" y="2.5" width="4.5" height="4.5" fill="none" stroke="#c5573a" stroke-width="0.8"/><rect x="9" y="2.5" width="4.5" height="4.5" fill="none" stroke="#c5573a" stroke-width="0.8"/><rect x="2.5" y="9" width="4.5" height="4.5" fill="none" stroke="#c5573a" stroke-width="0.8"/><rect x="9" y="9" width="4.5" height="4.5" fill="none" stroke="#c5573a" stroke-width="0.8"/></svg>
<div class="t" style="left:700.10px;width:200px;text-align:center;top:70.14px;font-size:6.70px;line-height:6.70px;color:#2a2a2a;">Add-ins</div>
<svg class="r" style="left:826.40px;top:49.70px;width:16.60px;height:15.40px" viewBox="0 0 355 330"><defs><linearGradient id="cpl" x1="0" y1="0" x2="0" y2="1"><stop offset="0" stop-color="#1e9ff2"/><stop offset="0.55" stop-color="#3cbf5a"/><stop offset="1" stop-color="#f5c816"/></linearGradient><linearGradient id="cpr" x1="1" y1="0" x2="0" y2="1"><stop offset="0" stop-color="#a24ef0"/><stop offset="0.5" stop-color="#f0508a"/><stop offset="1" stop-color="#fb8a2e"/></linearGradient></defs><path d="M55 20 L250 20 L190 225 L20 225 Z" fill="url(#cpl)" stroke="url(#cpl)" stroke-width="36" stroke-linejoin="round"/><path d="M190 20 L250 20 L225 100 L175 100 Z" fill="#1f3fd0" stroke="#1f3fd0" stroke-width="20" stroke-linejoin="round" opacity="0.85"/><path d="M215 118 L335 118 L295 310 L135 310 Z" fill="url(#cpr)" stroke="url(#cpr)" stroke-width="36" stroke-linejoin="round"/></svg>
<div class="t" style="left:734.60px;width:200px;text-align:center;top:71.04px;font-size:6.70px;line-height:6.70px;color:#2a2a2a;">Copilot</div>
<svg class="r" style="left:832.30px;top:80.30px;width:4.00px;height:2.60px" viewBox="0 0 4 2.6"><path d="M0.4 0.4 L2 2 L3.6 0.4" stroke="#444" stroke-width="0.75" fill="none"/></svg>
<svg class="r" style="left:872.10px;top:50.80px;width:15.50px;height:16.00px" viewBox="0 0 15.5 16"><path d="M0.5 0.5 H8.5 L11.5 3.5 V15.5 H0.5Z" fill="none" stroke="#3f7fd0" stroke-width="0.8"/><path d="M3 10 Q5 4 6 2.5 Q6.5 6 9 9 Q5 8.5 2.5 11" stroke="#3f7fd0" stroke-width="0.6" fill="none"/><path d="M9 14.5 L14.5 9" stroke="#3f7fd0" stroke-width="2.2" stroke-linecap="round"/><path d="M9 14.5 L14.5 9" stroke="#c4c4c4" stroke-width="0.9" stroke-linecap="round"/></svg>
<div class="t" style="left:778.10px;width:200px;text-align:center;top:70.14px;font-size:6.70px;line-height:6.70px;color:#2a2a2a;">Create PDF</div>
<div class="t" style="left:778.10px;width:200px;text-align:center;top:79.34px;font-size:6.70px;line-height:6.70px;color:#2a2a2a;">and Share link</div>
<svg class="r" style="left:923.70px;top:50.80px;width:14.50px;height:16.00px" viewBox="0 0 14.5 16"><path d="M0.5 0.5 H8.5 L11.5 3.5 V15.5 H0.5Z" fill="none" stroke="#3f7fd0" stroke-width="0.8"/><path d="M3 10 Q5 4 6 2.5 Q6.5 6 9 9 Q5 8.5 2.5 11" stroke="#3f7fd0" stroke-width="0.6" fill="none"/><rect x="6.5" y="9.5" width="7.5" height="6" fill="#c4c4c4" stroke="#3f7fd0" stroke-width="0.8"/><path d="M6.8 9.8 L10.2 12.5 L13.7 9.8" stroke="#3f7fd0" stroke-width="0.7" fill="none"/></svg>
<div class="t" style="left:828.45px;width:200px;text-align:center;top:70.14px;font-size:6.70px;line-height:6.70px;color:#2a2a2a;">Create PDF and</div>
<div class="t" style="left:828.75px;width:200px;text-align:center;top:79.34px;font-size:6.70px;line-height:6.70px;color:#2a2a2a;">Share via Outlook</div>
<div class="r" style="left:4.00px;top:105.20px;width:57.70px;height:14.40px;background:transparent;border:0.8px solid #727272;border-radius:2.5px;box-sizing:border-box;"></div>
<div class="t" style="left:8.00px;top:110.35px;font-size:7.19px;line-height:7.19px;color:#f2f2f2;">A1</div>
<svg class="r" style="left:52.00px;top:111.50px;width:6.50px;height:4.00px" viewBox="0 0 6.5 4"><path d="M0.5 0.5 L3.2 3.2 L6 0.5" stroke="#d0d0d0" stroke-width="0.8" fill="none"/></svg>
<svg class="r" style="left:66.50px;top:108.50px;width:2.00px;height:8.00px" viewBox="0 0 2 8"><circle cx="1" cy="1" r="0.6" fill="#cfcfcf"/><circle cx="1" cy="4" r="0.6" fill="#cfcfcf"/><circle cx="1" cy="7" r="0.6" fill="#cfcfcf"/></svg>
<div class="r" style="left:72.90px;top:105.20px;width:48.00px;height:14.40px;background:transparent;border:0.8px solid #727272;border-radius:2.5px;box-sizing:border-box;"></div>
<svg class="r" style="left:76.60px;top:109.50px;width:7.00px;height:7.00px" viewBox="0 0 7 7"><path d="M0.5 0.5 L6.5 6.5 M6.5 0.5 L0.5 6.5" stroke="#8a8a8a" stroke-width="0.7"/></svg>
<svg class="r" style="left:88.90px;top:109.50px;width:9.00px;height:7.00px" viewBox="0 0 9 7"><path d="M0.5 3.8 L3.2 6.5 L8.5 0.5" stroke="#8a8a8a" stroke-width="0.7" fill="none"/></svg>
<div class="t" style="left:103.30px;top:109.63px;font-size:8.50px;line-height:8.50px;color:#e0e0e0;font-style:italic;font-family:"Liberation Serif",serif;">fx</div>
<svg class="r" style="left:114.00px;top:111.80px;width:5.50px;height:3.50px" viewBox="0 0 5.5 3.5"><path d="M0.4 0.4 L2.75 2.9 L5.1 0.4" stroke="#cfcfcf" stroke-width="0.7" fill="none"/></svg>
<div class="r" style="left:123.30px;top:105.20px;width:876.20px;height:49.00px;background:transparent;border:0.8px solid #727272;border-right:none;border-radius:2.5px 0 0 2.5px;box-sizing:border-box;"></div>
<div class="t" style="left:129.70px;top:110.24px;font-size:7.47px;line-height:7.47px;color:#f2f2f2;">Issue Type</div>
<svg class="r" style="left:992.20px;top:109.20px;width:6.40px;height:4.00px" viewBox="0 0 6.4 4"><path d="M0.4 3.6 L3.2 0.6 L6 3.6" stroke="#d4d4d4" stroke-width="0.9" fill="none"/></svg>
<div class="r" style="left:0.00px;top:157.40px;width:797.00px;height:11.10px;background:#4f4f4f;"></div>
<div class="r" style="left:0.00px;top:168.50px;width:14.50px;height:303.50px;background:#4f4f4f;"></div>
<div class="r" style="left:14.50px;top:168.50px;width:782.50px;height:303.50px;background:#ffffff;"></div>
<svg class="r" style="left:5.80px;top:160.20px;width:6.80px;height:6.80px" viewBox="0 0 6.8 6.8"><path d="M6.8 0 V6.8 H0Z" fill="#e8e8e8"/></svg>
<div class="r" style="left:14.10px;top:157.40px;width:0.90px;height:11.10px;background:#7a7a7a;"></div>
<div class="r" style="left:49.80px;top:157.40px;width:0.90px;height:11.10px;background:#7a7a7a;"></div>
<div class="r" style="left:85.60px;top:157.40px;width:0.90px;height:11.10px;background:#7a7a7a;"></div>
<div class="r" style="left:121.40px;top:157.40px;width:0.90px;height:11.10px;background:#7a7a7a;"></div>
<div class="r" style="left:157.20px;top:157.40px;width:0.90px;height:11.10px;background:#7a7a7a;"></div>
<div class="r" style="left:193.00px;top:157.40px;width:0.90px;height:11.10px;background:#7a7a7a;"></div>
<div class="r" style="left:228.90px;top:157.40px;width:0.90px;height:11.10px;background:#7a7a7a;"></div>
<div class="r" style="left:265.10px;top:157.40px;width:0.90px;height:11.10px;background:#7a7a7a;"></div>
<div class="r" style="left:301.20px;top:157.40px;width:0.90px;height:11.10px;background:#7a7a7a;"></div>
<div class="r" style="left:364.10px;top:157.40px;width:0.90px;height:11.10px;background:#7a7a7a;"></div>
<div class="r" style="left:426.60px;top:157.40px;width:0.90px;height:11.10px;background:#7a7a7a;"></div>
<div class="r" style="left:473.60px;top:157.40px;width:0.90px;height:11.10px;background:#7a7a7a;"></div>
<div class="r" style="left:509.60px;top:157.40px;width:0.90px;height:11.10px;background:#7a7a7a;"></div>
<div class="r" style="left:545.90px;top:157.40px;width:0.90px;height:11.10px;background:#7a7a7a;"></div>
<div class="r" style="left:581.60px;top:157.40px;width:0.90px;height:11.10px;background:#7a7a7a;"></div>
<div class="r" style="left:617.60px;top:157.40px;width:0.90px;height:11.10px;background:#7a7a7a;"></div>
<div class="r" style="left:653.60px;top:157.40px;width:0.90px;height:11.10px;background:#7a7a7a;"></div>
<div class="r" style="left:689.60px;top:157.40px;width:0.90px;height:11.10px;background:#7a7a7a;"></div>
<div class="r" style="left:725.60px;top:157.40px;width:0.90px;height:11.10px;background:#7a7a7a;"></div>
<div class="r" style="left:761.60px;top:157.40px;width:0.90px;height:11.10px;background:#7a7a7a;"></div>
<div class="r" style="left:0.00px;top:168.00px;width:797.00px;height:0.90px;background:#8a8a8a;"></div>
<div class="r" style="left:14.10px;top:168.50px;width:0.80px;height:303.50px;background:#8a8a8a;"></div>
<div class="t" style="left:14.50px;width:35.70px;text-align:center;top:158.20px;height:11px;font-size:7.2px;line-height:11.6px;color:#e4e4e4;">A</div>
<div class="t" style="left:50.20px;width:35.80px;text-align:center;top:158.20px;height:11px;font-size:7.2px;line-height:11.6px;color:#e4e4e4;">B</div>
<div class="t" style="left:86.00px;width:35.80px;text-align:center;top:158.20px;height:11px;font-size:7.2px;line-height:11.6px;color:#e4e4e4;">C</div>
<div class="t" style="left:121.80px;width:35.80px;text-align:center;top:158.20px;height:11px;font-size:7.2px;line-height:11.6px;color:#e4e4e4;">D</div>
<div class="t" style="left:157.60px;width:35.80px;text-align:center;top:158.20px;height:11px;font-size:7.2px;line-height:11.6px;color:#e4e4e4;">E</div>
<div class="t" style="left:193.40px;width:35.90px;text-align:center;top:158.20px;height:11px;font-size:7.2px;line-height:11.6px;color:#e4e4e4;">F</div>
<div class="t" style="left:229.30px;width:36.20px;text-align:center;top:158.20px;height:11px;font-size:7.2px;line-height:11.6px;color:#e4e4e4;">G</div>
<div class="t" style="left:265.50px;width:36.10px;text-align:center;top:158.20px;height:11px;font-size:7.2px;line-height:11.6px;color:#e4e4e4;">H</div>
<div class="t" style="left:301.60px;width:62.90px;text-align:center;top:158.20px;height:11px;font-size:7.2px;line-height:11.6px;color:#e4e4e4;">I</div>
<div class="t" style="left:364.50px;width:62.50px;text-align:center;top:158.20px;height:11px;font-size:7.2px;line-height:11.6px;color:#e4e4e4;">J</div>
<div class="t" style="left:427.00px;width:47.00px;text-align:center;top:158.20px;height:11px;font-size:7.2px;line-height:11.6px;color:#e4e4e4;">K</div>
<div class="t" style="left:474.00px;width:36.00px;text-align:center;top:158.20px;height:11px;font-size:7.2px;line-height:11.6px;color:#e4e4e4;">L</div>
<div class="t" style="left:510.00px;width:36.30px;text-align:center;top:158.20px;height:11px;font-size:7.2px;line-height:11.6px;color:#e4e4e4;">M</div>
<div class="t" style="left:546.30px;width:35.70px;text-align:center;top:158.20px;height:11px;font-size:7.2px;line-height:11.6px;color:#e4e4e4;">N</div>
<div class="t" style="left:582.00px;width:36.00px;text-align:center;top:158.20px;height:11px;font-size:7.2px;line-height:11.6px;color:#e4e4e4;">O</div>
<div class="t" style="left:618.00px;width:36.00px;text-align:center;top:158.20px;height:11px;font-size:7.2px;line-height:11.6px;color:#e4e4e4;">P</div>
<div class="t" style="left:654.00px;width:36.00px;text-align:center;top:158.20px;height:11px;font-size:7.2px;line-height:11.6px;color:#e4e4e4;">Q</div>
<div class="t" style="left:690.00px;width:36.00px;text-align:center;top:158.20px;height:11px;font-size:7.2px;line-height:11.6px;color:#e4e4e4;">R</div>
<div class="t" style="left:726.00px;width:36.00px;text-align:center;top:158.20px;height:11px;font-size:7.2px;line-height:11.6px;color:#e4e4e4;">S</div>
<div class="t" style="left:762.00px;width:35.00px;text-align:center;top:158.20px;height:11px;font-size:7.2px;line-height:11.6px;color:#e4e4e4;">T</div>
<div class="r" style="left:14.50px;top:179.22px;width:782.50px;height:1.00px;background:#eeeeee;"></div>
<div class="r" style="left:0.00px;top:179.22px;width:14.10px;height:1.00px;background:#6a6a6a;"></div>
<div class="r" style="left:14.50px;top:190.44px;width:782.50px;height:1.00px;background:#eeeeee;"></div>
<div class="r" style="left:0.00px;top:190.44px;width:14.10px;height:1.00px;background:#6a6a6a;"></div>
<div class="r" style="left:14.50px;top:201.66px;width:782.50px;height:1.00px;background:#eeeeee;"></div>
<div class="r" style="left:0.00px;top:201.66px;width:14.10px;height:1.00px;background:#6a6a6a;"></div>
<div class="r" style="left:14.50px;top:212.88px;width:782.50px;height:1.00px;background:#eeeeee;"></div>
<div class="r" style="left:0.00px;top:212.88px;width:14.10px;height:1.00px;background:#6a6a6a;"></div>
<div class="r" style="left:14.50px;top:224.10px;width:782.50px;height:1.00px;background:#eeeeee;"></div>
<div class="r" style="left:0.00px;top:224.10px;width:14.10px;height:1.00px;background:#6a6a6a;"></div>
<div class="r" style="left:14.50px;top:235.32px;width:782.50px;height:1.00px;background:#eeeeee;"></div>
<div class="r" style="left:0.00px;top:235.32px;width:14.10px;height:1.00px;background:#6a6a6a;"></div>
<div class="r" style="left:14.50px;top:246.54px;width:782.50px;height:1.00px;background:#eeeeee;"></div>
<div class="r" style="left:0.00px;top:246.54px;width:14.10px;height:1.00px;background:#6a6a6a;"></div>
<div class="r" style="left:14.50px;top:257.76px;width:782.50px;height:1.00px;background:#eeeeee;"></div>
<div class="r" style="left:0.00px;top:257.76px;width:14.10px;height:1.00px;background:#6a6a6a;"></div>
<div class="r" style="left:14.50px;top:268.98px;width:782.50px;height:1.00px;background:#eeeeee;"></div>
<div class="r" style="left:0.00px;top:268.98px;width:14.10px;height:1.00px;background:#6a6a6a;"></div>
<div class="r" style="left:14.50px;top:280.20px;width:782.50px;height:1.00px;background:#eeeeee;"></div>
<div class="r" style="left:0.00px;top:280.20px;width:14.10px;height:1.00px;background:#6a6a6a;"></div>
<div class="r" style="left:14.50px;top:291.42px;width:782.50px;height:1.00px;background:#eeeeee;"></div>
<div class="r" style="left:0.00px;top:291.42px;width:14.10px;height:1.00px;background:#6a6a6a;"></div>
<div class="r" style="left:14.50px;top:302.64px;width:782.50px;height:1.00px;background:#eeeeee;"></div>
<div class="r" style="left:0.00px;top:302.64px;width:14.10px;height:1.00px;background:#6a6a6a;"></div>
<div class="r" style="left:14.50px;top:313.86px;width:782.50px;height:1.00px;background:#eeeeee;"></div>
<div class="r" style="left:0.00px;top:313.86px;width:14.10px;height:1.00px;background:#6a6a6a;"></div>
<div class="r" style="left:14.50px;top:325.08px;width:782.50px;height:1.00px;background:#eeeeee;"></div>
<div class="r" style="left:0.00px;top:325.08px;width:14.10px;height:1.00px;background:#6a6a6a;"></div>
<div class="r" style="left:14.50px;top:336.30px;width:782.50px;height:1.00px;background:#eeeeee;"></div>
<div class="r" style="left:0.00px;top:336.30px;width:14.10px;height:1.00px;background:#6a6a6a;"></div>
<div class="r" style="left:14.50px;top:347.52px;width:782.50px;height:1.00px;background:#eeeeee;"></div>
<div class="r" style="left:0.00px;top:347.52px;width:14.10px;height:1.00px;background:#6a6a6a;"></div>
<div class="r" style="left:14.50px;top:358.74px;width:782.50px;height:1.00px;background:#eeeeee;"></div>
<div class="r" style="left:0.00px;top:358.74px;width:14.10px;height:1.00px;background:#6a6a6a;"></div>
<div class="r" style="left:14.50px;top:369.96px;width:782.50px;height:1.00px;background:#eeeeee;"></div>
<div class="r" style="left:0.00px;top:369.96px;width:14.10px;height:1.00px;background:#6a6a6a;"></div>
<div class="r" style="left:14.50px;top:381.18px;width:782.50px;height:1.00px;background:#eeeeee;"></div>
<div class="r" style="left:0.00px;top:381.18px;width:14.10px;height:1.00px;background:#6a6a6a;"></div>
<div class="r" style="left:14.50px;top:392.40px;width:782.50px;height:1.00px;background:#eeeeee;"></div>
<div class="r" style="left:0.00px;top:392.40px;width:14.10px;height:1.00px;background:#6a6a6a;"></div>
<div class="r" style="left:14.50px;top:403.62px;width:782.50px;height:1.00px;background:#eeeeee;"></div>
<div class="r" style="left:0.00px;top:403.62px;width:14.10px;height:1.00px;background:#6a6a6a;"></div>
<div class="r" style="left:14.50px;top:414.84px;width:782.50px;height:1.00px;background:#eeeeee;"></div>
<div class="r" style="left:0.00px;top:414.84px;width:14.10px;height:1.00px;background:#6a6a6a;"></div>
<div class="r" style="left:14.50px;top:426.06px;width:782.50px;height:1.00px;background:#eeeeee;"></div>
<div class="r" style="left:0.00px;top:426.06px;width:14.10px;height:1.00px;background:#6a6a6a;"></div>
<div class="r" style="left:14.50px;top:437.28px;width:782.50px;height:1.00px;background:#eeeeee;"></div>
<div class="r" style="left:0.00px;top:437.28px;width:14.10px;height:1.00px;background:#6a6a6a;"></div>
<div class="r" style="left:14.50px;top:448.50px;width:782.50px;height:1.00px;background:#eeeeee;"></div>
<div class="r" style="left:0.00px;top:448.50px;width:14.10px;height:1.00px;background:#6a6a6a;"></div>
<div class="r" style="left:14.50px;top:459.72px;width:782.50px;height:1.00px;background:#eeeeee;"></div>
<div class="r" style="left:0.00px;top:459.72px;width:14.10px;height:1.00px;background:#6a6a6a;"></div>
<div class="r" style="left:14.50px;top:470.94px;width:782.50px;height:1.00px;background:#eeeeee;"></div>
<div class="r" style="left:0.00px;top:470.94px;width:14.10px;height:1.00px;background:#6a6a6a;"></div>
<div class="r" style="left:49.70px;top:168.50px;width:1.00px;height:303.50px;background:#eeeeee;"></div>
<div class="r" style="left:85.50px;top:168.50px;width:1.00px;height:303.50px;background:#eeeeee;"></div>
<div class="r" style="left:121.30px;top:168.50px;width:1.00px;height:303.50px;background:#eeeeee;"></div>
<div class="r" style="left:157.10px;top:168.50px;width:1.00px;height:303.50px;background:#eeeeee;"></div>
<div class="r" style="left:192.90px;top:168.50px;width:1.00px;height:303.50px;background:#eeeeee;"></div>
<div class="r" style="left:228.80px;top:168.50px;width:1.00px;height:303.50px;background:#eeeeee;"></div>
<div class="r" style="left:265.00px;top:168.50px;width:1.00px;height:303.50px;background:#eeeeee;"></div>
<div class="r" style="left:301.10px;top:168.50px;width:1.00px;height:303.50px;background:#eeeeee;"></div>
<div class="r" style="left:364.00px;top:168.50px;width:1.00px;height:303.50px;background:#eeeeee;"></div>
<div class="r" style="left:426.50px;top:168.50px;width:1.00px;height:303.50px;background:#eeeeee;"></div>
<div class="r" style="left:473.50px;top:168.50px;width:1.00px;height:303.50px;background:#eeeeee;"></div>
<div class="r" style="left:509.50px;top:168.50px;width:1.00px;height:303.50px;background:#eeeeee;"></div>
<div class="r" style="left:545.80px;top:168.50px;width:1.00px;height:303.50px;background:#eeeeee;"></div>
<div class="r" style="left:581.50px;top:168.50px;width:1.00px;height:303.50px;background:#eeeeee;"></div>
<div class="r" style="left:617.50px;top:168.50px;width:1.00px;height:303.50px;background:#eeeeee;"></div>
<div class="r" style="left:653.50px;top:168.50px;width:1.00px;height:303.50px;background:#eeeeee;"></div>
<div class="r" style="left:689.50px;top:168.50px;width:1.00px;height:303.50px;background:#eeeeee;"></div>
<div class="r" style="left:725.50px;top:168.50px;width:1.00px;height:303.50px;background:#eeeeee;"></div>
<div class="r" style="left:761.50px;top:168.50px;width:1.00px;height:303.50px;background:#eeeeee;"></div>
<div class="r" style="left:509.30px;top:169.10px;width:1.50px;height:10.02px;background:#ffffff;"></div>
<div class="t" style="left:0;width:14.1px;text-align:center;top:168.50px;font-size:7.2px;line-height:11.8px;color:#e8e8e8;">1</div>
<div class="t" style="left:0;width:14.1px;text-align:center;top:179.72px;font-size:7.2px;line-height:11.8px;color:#e8e8e8;">2</div>
<div class="t" style="left:0;width:14.1px;text-align:center;top:190.94px;font-size:7.2px;line-height:11.8px;color:#e8e8e8;">3</div>
<div class="t" style="left:0;width:14.1px;text-align:center;top:202.16px;font-size:7.2px;line-height:11.8px;color:#e8e8e8;">4</div>
<div class="t" style="left:0;width:14.1px;text-align:center;top:213.38px;font-size:7.2px;line-height:11.8px;color:#e8e8e8;">5</div>
<div class="t" style="left:0;width:14.1px;text-align:center;top:224.60px;font-size:7.2px;line-height:11.8px;color:#e8e8e8;">6</div>
<div class="t" style="left:0;width:14.1px;text-align:center;top:235.82px;font-size:7.2px;line-height:11.8px;color:#e8e8e8;">7</div>
<div class="t" style="left:0;width:14.1px;text-align:center;top:247.04px;font-size:7.2px;line-height:11.8px;color:#e8e8e8;">8</div>
<div class="t" style="left:0;width:14.1px;text-align:center;top:258.26px;font-size:7.2px;line-height:11.8px;color:#e8e8e8;">9</div>
<div class="t" style="left:0;width:14.1px;text-align:center;top:269.48px;font-size:7.2px;line-height:11.8px;color:#e8e8e8;">10</div>
<div class="t" style="left:0;width:14.1px;text-align:center;top:280.70px;font-size:7.2px;line-height:11.8px;color:#e8e8e8;">11</div>
<div class="t" style="left:0;width:14.1px;text-align:center;top:291.92px;font-size:7.2px;line-height:11.8px;color:#e8e8e8;">12</div>
<div class="t" style="left:0;width:14.1px;text-align:center;top:303.14px;font-size:7.2px;line-height:11.8px;color:#e8e8e8;">13</div>
<div class="t" style="left:0;width:14.1px;text-align:center;top:314.36px;font-size:7.2px;line-height:11.8px;color:#e8e8e8;">14</div>
<div class="t" style="left:0;width:14.1px;text-align:center;top:325.58px;font-size:7.2px;line-height:11.8px;color:#e8e8e8;">15</div>
<div class="t" style="left:0;width:14.1px;text-align:center;top:336.80px;font-size:7.2px;line-height:11.8px;color:#e8e8e8;">16</div>
<div class="t" style="left:0;width:14.1px;text-align:center;top:348.02px;font-size:7.2px;line-height:11.8px;color:#e8e8e8;">17</div>
<div class="t" style="left:0;width:14.1px;text-align:center;top:359.24px;font-size:7.2px;line-height:11.8px;color:#e8e8e8;">18</div>
<div class="t" style="left:0;width:14.1px;text-align:center;top:370.46px;font-size:7.2px;line-height:11.8px;color:#e8e8e8;">19</div>
<div class="t" style="left:0;width:14.1px;text-align:center;top:381.68px;font-size:7.2px;line-height:11.8px;color:#e8e8e8;">20</div>
<div class="t" style="left:0;width:14.1px;text-align:center;top:392.90px;font-size:7.2px;line-height:11.8px;color:#e8e8e8;">21</div>
<div class="t" style="left:0;width:14.1px;text-align:center;top:404.12px;font-size:7.2px;line-height:11.8px;color:#e8e8e8;">22</div>
<div class="t" style="left:0;width:14.1px;text-align:center;top:415.34px;font-size:7.2px;line-height:11.8px;color:#e8e8e8;">23</div>
<div class="t" style="left:0;width:14.1px;text-align:center;top:426.56px;font-size:7.2px;line-height:11.8px;color:#e8e8e8;">24</div>
<div class="t" style="left:0;width:14.1px;text-align:center;top:437.78px;font-size:7.2px;line-height:11.8px;color:#e8e8e8;">25</div>
<div class="t" style="left:0;width:14.1px;text-align:center;top:449.00px;font-size:7.2px;line-height:11.8px;color:#e8e8e8;">26</div>
<div class="t" style="left:0;width:14.1px;text-align:center;top:460.22px;font-size:7.2px;line-height:11.8px;color:#e8e8e8;">27</div>
<div class="c" style="left:15.10px;top:169.00px;width:34.60px;height:10.42px;padding:0 1px;box-sizing:border-box;">Issue Type</div>
<div class="c" style="left:50.80px;top:169.00px;width:34.70px;height:10.42px;padding:0 1px;box-sizing:border-box;">Key</div>
<div class="c" style="left:86.60px;top:169.00px;width:34.70px;height:10.42px;padding:0 1px;box-sizing:border-box;">Summary</div>
<div class="c" style="left:122.40px;top:169.00px;width:34.70px;height:10.42px;padding:0 1px;box-sizing:border-box;">Assignee</div>
<div class="c" style="left:158.20px;top:169.00px;width:34.70px;height:10.42px;padding:0 1px;box-sizing:border-box;">Reporter</div>
<div class="c" style="left:194.00px;top:169.00px;width:34.80px;height:10.42px;padding:0 1px;box-sizing:border-box;">Priority</div>
<div class="c" style="left:229.90px;top:169.00px;width:35.10px;height:10.42px;padding:0 1px;box-sizing:border-box;">Status</div>
<div class="c" style="left:266.10px;top:169.00px;width:35.00px;height:10.42px;padding:0 1px;box-sizing:border-box;">Resolution</div>
<div class="c" style="left:302.20px;top:169.00px;width:61.80px;height:10.42px;padding:0 1px;box-sizing:border-box;">Created</div>
<div class="c" style="left:365.10px;top:169.00px;width:61.40px;height:10.42px;padding:0 1px;box-sizing:border-box;">Updated</div>
<div class="c" style="left:427.60px;top:169.00px;width:45.90px;height:10.42px;padding:0 1px;box-sizing:border-box;">Due date</div>
<div class="c" style="left:474.60px;top:169.00px;width:71.20px;height:10.42px;padding:0 1px;box-sizing:border-box;">Date CAMMs Raised</div>
<div class="c" style="left:15.10px;top:180.22px;width:34.60px;height:10.42px;padding:0 1px;box-sizing:border-box;">Lease Req</div>
<div class="c" style="left:50.80px;top:180.22px;width:34.70px;height:10.42px;padding:0 1px;box-sizing:border-box;"><span style="color:#3b72cc;-webkit-text-stroke:0.1px #3b72cc;text-decoration:underline;text-decoration-thickness:0.6px;text-underline-offset:0.3px;">LAS-684</span></div>
<div class="c" style="left:86.60px;top:180.22px;width:34.70px;height:10.42px;padding:0 1px;box-sizing:border-box;">Renewal - </div>
<div class="c" style="left:122.40px;top:180.22px;width:34.70px;height:10.42px;padding:0 1px;box-sizing:border-box;">Ednar Alib</div>
<div class="c" style="left:158.20px;top:180.22px;width:34.70px;height:10.42px;padding:0 1px;box-sizing:border-box;">Ednar Alib</div>
<div class="c" style="left:194.00px;top:180.22px;width:34.80px;height:10.42px;padding:0 1px;box-sizing:border-box;">Medium</div>
<div class="c" style="left:229.90px;top:180.22px;width:35.10px;height:10.42px;padding:0 1px;box-sizing:border-box;">PM Validat</div>
<div class="c" style="left:302.20px;top:180.22px;width:61.80px;height:10.42px;text-align:right;font-size:7.55px;padding:0 1px;box-sizing:border-box;">5/03/2026 19:32</div>
<div class="c" style="left:365.10px;top:180.22px;width:61.40px;height:10.42px;text-align:right;font-size:7.55px;padding:0 1px;box-sizing:border-box;">5/03/2026 19:34</div>
<div class="c" style="left:427.60px;top:180.22px;width:45.90px;height:10.42px;text-align:right;font-size:7.55px;padding:0 1px;box-sizing:border-box;">9/03/2026</div>
<div class="c" style="left:15.10px;top:191.44px;width:34.60px;height:10.42px;padding:0 1px;box-sizing:border-box;">Lease Req</div>
<div class="c" style="left:50.80px;top:191.44px;width:34.70px;height:10.42px;padding:0 1px;box-sizing:border-box;"><span style="color:#3b72cc;-webkit-text-stroke:0.1px #3b72cc;text-decoration:underline;text-decoration-thickness:0.6px;text-underline-offset:0.3px;">LAS-683</span></div>
<div class="c" style="left:86.60px;top:191.44px;width:34.70px;height:10.42px;padding:0 1px;box-sizing:border-box;">New Lease</div>
<div class="c" style="left:122.40px;top:191.44px;width:34.70px;height:10.42px;padding:0 1px;box-sizing:border-box;">Ednar Alib</div>
<div class="c" style="left:158.20px;top:191.44px;width:34.70px;height:10.42px;padding:0 1px;box-sizing:border-box;">Ednar Alib</div>
<div class="c" style="left:194.00px;top:191.44px;width:34.80px;height:10.42px;padding:0 1px;box-sizing:border-box;">Medium</div>
<div class="c" style="left:229.90px;top:191.44px;width:35.10px;height:10.42px;padding:0 1px;box-sizing:border-box;">PM Validat</div>
<div class="c" style="left:302.20px;top:191.44px;width:61.80px;height:10.42px;text-align:right;font-size:7.55px;padding:0 1px;box-sizing:border-box;">5/03/2026 19:14</div>
<div class="c" style="left:365.10px;top:191.44px;width:61.40px;height:10.42px;text-align:right;font-size:7.55px;padding:0 1px;box-sizing:border-box;">5/03/2026 19:15</div>
<div class="c" style="left:427.60px;top:191.44px;width:45.90px;height:10.42px;text-align:right;font-size:7.55px;padding:0 1px;box-sizing:border-box;">9/03/2026</div>
<div class="c" style="left:15.10px;top:202.66px;width:34.60px;height:10.42px;padding:0 1px;box-sizing:border-box;">Lease Req</div>
<div class="c" style="left:50.80px;top:202.66px;width:34.70px;height:10.42px;padding:0 1px;box-sizing:border-box;"><span style="color:#3b72cc;-webkit-text-stroke:0.1px #3b72cc;text-decoration:underline;text-decoration-thickness:0.6px;text-underline-offset:0.3px;">LAS-682</span></div>
<div class="c" style="left:86.60px;top:202.66px;width:34.70px;height:10.42px;padding:0 1px;box-sizing:border-box;">Extension</div>
<div class="c" style="left:122.40px;top:202.66px;width:34.70px;height:10.42px;padding:0 1px;box-sizing:border-box;">Ednar Alib</div>
<div class="c" style="left:158.20px;top:202.66px;width:34.70px;height:10.42px;padding:0 1px;box-sizing:border-box;">Ednar Alib</div>
<div class="c" style="left:194.00px;top:202.66px;width:34.80px;height:10.42px;padding:0 1px;box-sizing:border-box;">Medium</div>
<div class="c" style="left:229.90px;top:202.66px;width:35.10px;height:10.42px;padding:0 1px;box-sizing:border-box;">PM Validat</div>
<div class="c" style="left:302.20px;top:202.66px;width:61.80px;height:10.42px;text-align:right;font-size:7.55px;padding:0 1px;box-sizing:border-box;">5/03/2026 18:56</div>
<div class="c" style="left:365.10px;top:202.66px;width:61.40px;height:10.42px;text-align:right;font-size:7.55px;padding:0 1px;box-sizing:border-box;">5/03/2026 18:59</div>
<div class="c" style="left:427.60px;top:202.66px;width:45.90px;height:10.42px;text-align:right;font-size:7.55px;padding:0 1px;box-sizing:border-box;">9/03/2026</div>
<div class="c" style="left:15.10px;top:213.88px;width:34.60px;height:10.42px;padding:0 1px;box-sizing:border-box;">Lease Req</div>
<div class="c" style="left:50.80px;top:213.88px;width:34.70px;height:10.42px;padding:0 1px;box-sizing:border-box;"><span style="color:#3b72cc;-webkit-text-stroke:0.1px #3b72cc;text-decoration:underline;text-decoration-thickness:0.6px;text-underline-offset:0.3px;">LAS-681</span></div>
<div class="c" style="left:86.60px;top:213.88px;width:34.70px;height:10.42px;padding:0 1px;box-sizing:border-box;">New Lease</div>
<div class="c" style="left:122.40px;top:213.88px;width:34.70px;height:10.42px;padding:0 1px;box-sizing:border-box;">Luisito Re</div>
<div class="c" style="left:158.20px;top:213.88px;width:34.70px;height:10.42px;padding:0 1px;box-sizing:border-box;">Luisito Re</div>
<div class="c" style="left:194.00px;top:213.88px;width:34.80px;height:10.42px;padding:0 1px;box-sizing:border-box;">Medium</div>
<div class="c" style="left:229.90px;top:213.88px;width:35.10px;height:10.42px;padding:0 1px;box-sizing:border-box;">PM Validat</div>
<div class="c" style="left:302.20px;top:213.88px;width:61.80px;height:10.42px;text-align:right;font-size:7.55px;padding:0 1px;box-sizing:border-box;">4/03/2026 18:10</div>
<div class="c" style="left:365.10px;top:213.88px;width:61.40px;height:10.42px;text-align:right;font-size:7.55px;padding:0 1px;box-sizing:border-box;">4/03/2026 18:11</div>
<div class="c" style="left:427.60px;top:213.88px;width:45.90px;height:10.42px;text-align:right;font-size:7.55px;padding:0 1px;box-sizing:border-box;">6/03/2026</div>
<div class="c" style="left:15.10px;top:225.10px;width:34.60px;height:10.42px;padding:0 1px;box-sizing:border-box;">Lease Req</div>
<div class="c" style="left:50.80px;top:225.10px;width:34.70px;height:10.42px;padding:0 1px;box-sizing:border-box;"><span style="color:#3b72cc;-webkit-text-stroke:0.1px #3b72cc;text-decoration:underline;text-decoration-thickness:0.6px;text-underline-offset:0.3px;">LAS-680</span></div>
<div class="c" style="left:86.60px;top:225.10px;width:34.70px;height:10.42px;padding:0 1px;box-sizing:border-box;">Extension</div>
<div class="c" style="left:122.40px;top:225.10px;width:34.70px;height:10.42px;padding:0 1px;box-sizing:border-box;">Gerald Ma</div>
<div class="c" style="left:158.20px;top:225.10px;width:34.70px;height:10.42px;padding:0 1px;box-sizing:border-box;">Gerald Ma</div>
<div class="c" style="left:194.00px;top:225.10px;width:34.80px;height:10.42px;padding:0 1px;box-sizing:border-box;">Medium</div>
<div class="c" style="left:229.90px;top:225.10px;width:35.10px;height:10.42px;padding:0 1px;box-sizing:border-box;">PM Validat</div>
<div class="c" style="left:302.20px;top:225.10px;width:61.80px;height:10.42px;text-align:right;font-size:7.55px;padding:0 1px;box-sizing:border-box;">4/03/2026 15:10</div>
<div class="c" style="left:365.10px;top:225.10px;width:61.40px;height:10.42px;text-align:right;font-size:7.55px;padding:0 1px;box-sizing:border-box;">4/03/2026 15:12</div>
<div class="c" style="left:427.60px;top:225.10px;width:45.90px;height:10.42px;text-align:right;font-size:7.55px;padding:0 1px;box-sizing:border-box;">9/03/2026</div>
<div class="c" style="left:15.10px;top:236.32px;width:34.60px;height:10.42px;padding:0 1px;box-sizing:border-box;">Lease Req</div>
<div class="c" style="left:50.80px;top:236.32px;width:34.70px;height:10.42px;padding:0 1px;box-sizing:border-box;"><span style="color:#3b72cc;-webkit-text-stroke:0.1px #3b72cc;text-decoration:underline;text-decoration-thickness:0.6px;text-underline-offset:0.3px;">LAS-679</span></div>
<div class="c" style="left:86.60px;top:236.32px;width:34.70px;height:10.42px;padding:0 1px;box-sizing:border-box;">New Lease</div>
<div class="c" style="left:122.40px;top:236.32px;width:34.70px;height:10.42px;padding:0 1px;box-sizing:border-box;">Ronwenal</div>
<div class="c" style="left:158.20px;top:236.32px;width:34.70px;height:10.42px;padding:0 1px;box-sizing:border-box;">Ronwenal</div>
<div class="c" style="left:194.00px;top:236.32px;width:34.80px;height:10.42px;padding:0 1px;box-sizing:border-box;">Medium</div>
<div class="c" style="left:229.90px;top:236.32px;width:35.10px;height:10.42px;padding:0 1px;box-sizing:border-box;">PM In-Rev</div>
<div class="c" style="left:302.20px;top:236.32px;width:61.80px;height:10.42px;text-align:right;font-size:7.55px;padding:0 1px;box-sizing:border-box;">4/03/2026 3:40</div>
<div class="c" style="left:365.10px;top:236.32px;width:61.40px;height:10.42px;text-align:right;font-size:7.55px;padding:0 1px;box-sizing:border-box;">4/03/2026 15:51</div>
<div class="c" style="left:427.60px;top:236.32px;width:45.90px;height:10.42px;text-align:right;font-size:7.55px;padding:0 1px;box-sizing:border-box;">6/03/2026</div>
<div class="c" style="left:15.10px;top:247.54px;width:34.60px;height:10.42px;padding:0 1px;box-sizing:border-box;">Lease Req</div>
<div class="c" style="left:50.80px;top:247.54px;width:34.70px;height:10.42px;padding:0 1px;box-sizing:border-box;"><span style="color:#3b72cc;-webkit-text-stroke:0.1px #3b72cc;text-decoration:underline;text-decoration-thickness:0.6px;text-underline-offset:0.3px;">LAS-677</span></div>
<div class="c" style="left:86.60px;top:247.54px;width:34.70px;height:10.42px;padding:0 1px;box-sizing:border-box;">New Lease</div>
<div class="c" style="left:122.40px;top:247.54px;width:34.70px;height:10.42px;padding:0 1px;box-sizing:border-box;">Gerald Ma</div>
<div class="c" style="left:158.20px;top:247.54px;width:34.70px;height:10.42px;padding:0 1px;box-sizing:border-box;">Gerald Ma</div>
<div class="c" style="left:194.00px;top:247.54px;width:34.80px;height:10.42px;padding:0 1px;box-sizing:border-box;">Medium</div>
<div class="c" style="left:229.90px;top:247.54px;width:35.10px;height:10.42px;padding:0 1px;box-sizing:border-box;">PM In-Rev</div>
<div class="c" style="left:302.20px;top:247.54px;width:61.80px;height:10.42px;text-align:right;font-size:7.55px;padding:0 1px;box-sizing:border-box;">2/03/2026 16:36</div>
<div class="c" style="left:365.10px;top:247.54px;width:61.40px;height:10.42px;text-align:right;font-size:7.55px;padding:0 1px;box-sizing:border-box;">5/03/2026 8:32</div>
<div class="c" style="left:427.60px;top:247.54px;width:45.90px;height:10.42px;text-align:right;font-size:7.55px;padding:0 1px;box-sizing:border-box;">5/03/2026</div>
<div class="c" style="left:15.10px;top:258.76px;width:34.60px;height:10.42px;padding:0 1px;box-sizing:border-box;">Lease Req</div>
<div class="c" style="left:50.80px;top:258.76px;width:34.70px;height:10.42px;padding:0 1px;box-sizing:border-box;"><span style="color:#3b72cc;-webkit-text-stroke:0.1px #3b72cc;text-decoration:underline;text-decoration-thickness:0.6px;text-underline-offset:0.3px;">LAS-676</span></div>
<div class="c" style="left:86.60px;top:258.76px;width:34.70px;height:10.42px;padding:0 1px;box-sizing:border-box;">Renewal - </div>
<div class="c" style="left:122.40px;top:258.76px;width:34.70px;height:10.42px;padding:0 1px;box-sizing:border-box;">Ronwenal</div>
<div class="c" style="left:158.20px;top:258.76px;width:34.70px;height:10.42px;padding:0 1px;box-sizing:border-box;">Ronwenal</div>
<div class="c" style="left:194.00px;top:258.76px;width:34.80px;height:10.42px;padding:0 1px;box-sizing:border-box;">Medium</div>
<div class="c" style="left:229.90px;top:258.76px;width:35.10px;height:10.42px;padding:0 1px;box-sizing:border-box;">PM In-Rev</div>
<div class="c" style="left:302.20px;top:258.76px;width:61.80px;height:10.42px;text-align:right;font-size:7.55px;padding:0 1px;box-sizing:border-box;">2/03/2026 15:07</div>
<div class="c" style="left:365.10px;top:258.76px;width:61.40px;height:10.42px;text-align:right;font-size:7.55px;padding:0 1px;box-sizing:border-box;">3/03/2026 13:09</div>
<div class="c" style="left:427.60px;top:258.76px;width:45.90px;height:10.42px;text-align:right;font-size:7.55px;padding:0 1px;box-sizing:border-box;">4/03/2026</div>
<div class="c" style="left:15.10px;top:269.98px;width:34.60px;height:10.42px;padding:0 1px;box-sizing:border-box;">Lease Req</div>
<div class="c" style="left:50.80px;top:269.98px;width:34.70px;height:10.42px;padding:0 1px;box-sizing:border-box;"><span style="color:#3b72cc;-webkit-text-stroke:0.1px #3b72cc;text-decoration:underline;text-decoration-thickness:0.6px;text-underline-offset:0.3px;">LAS-675</span></div>
<div class="c" style="left:86.60px;top:269.98px;width:34.70px;height:10.42px;padding:0 1px;box-sizing:border-box;">New Lease</div>
<div class="c" style="left:122.40px;top:269.98px;width:34.70px;height:10.42px;padding:0 1px;box-sizing:border-box;">Ronwenal</div>
<div class="c" style="left:158.20px;top:269.98px;width:34.70px;height:10.42px;padding:0 1px;box-sizing:border-box;">Ronwenal</div>
<div class="c" style="left:194.00px;top:269.98px;width:34.80px;height:10.42px;padding:0 1px;box-sizing:border-box;">Medium</div>
<div class="c" style="left:229.90px;top:269.98px;width:35.10px;height:10.42px;padding:0 1px;box-sizing:border-box;">PM In-Rev</div>
<div class="c" style="left:302.20px;top:269.98px;width:61.80px;height:10.42px;text-align:right;font-size:7.55px;padding:0 1px;box-sizing:border-box;">2/03/2026 14:42</div>
<div class="c" style="left:365.10px;top:269.98px;width:61.40px;height:10.42px;text-align:right;font-size:7.55px;padding:0 1px;box-sizing:border-box;">3/03/2026 12:56</div>
<div class="c" style="left:427.60px;top:269.98px;width:45.90px;height:10.42px;text-align:right;font-size:7.55px;padding:0 1px;box-sizing:border-box;">4/03/2026</div>
<div class="c" style="left:15.10px;top:281.20px;width:34.60px;height:10.42px;padding:0 1px;box-sizing:border-box;">Lease Req</div>
<div class="c" style="left:50.80px;top:281.20px;width:34.70px;height:10.42px;padding:0 1px;box-sizing:border-box;"><span style="color:#3b72cc;-webkit-text-stroke:0.1px #3b72cc;text-decoration:underline;text-decoration-thickness:0.6px;text-underline-offset:0.3px;">LAS-674</span></div>
<div class="c" style="left:86.60px;top:281.20px;width:34.70px;height:10.42px;padding:0 1px;box-sizing:border-box;">New Lease</div>
<div class="c" style="left:122.40px;top:281.20px;width:34.70px;height:10.42px;padding:0 1px;box-sizing:border-box;">Ednar Alib</div>
<div class="c" style="left:158.20px;top:281.20px;width:34.70px;height:10.42px;padding:0 1px;box-sizing:border-box;">Ednar Alib</div>
<div class="c" style="left:194.00px;top:281.20px;width:34.80px;height:10.42px;padding:0 1px;box-sizing:border-box;">Medium</div>
<div class="c" style="left:229.90px;top:281.20px;width:35.10px;height:10.42px;padding:0 1px;box-sizing:border-box;">PM Validat</div>
<div class="c" style="left:302.20px;top:281.20px;width:61.80px;height:10.42px;text-align:right;font-size:7.55px;padding:0 1px;box-sizing:border-box;">2/03/2026 12:18</div>
<div class="c" style="left:365.10px;top:281.20px;width:61.40px;height:10.42px;text-align:right;font-size:7.55px;padding:0 1px;box-sizing:border-box;">2/03/2026 12:21</div>
<div class="c" style="left:427.60px;top:281.20px;width:45.90px;height:10.42px;text-align:right;font-size:7.55px;padding:0 1px;box-sizing:border-box;">4/03/2026</div>
<div class="c" style="left:15.10px;top:292.42px;width:34.60px;height:10.42px;padding:0 1px;box-sizing:border-box;">Lease Req</div>
<div class="c" style="left:50.80px;top:292.42px;width:34.70px;height:10.42px;padding:0 1px;box-sizing:border-box;"><span style="color:#3b72cc;-webkit-text-stroke:0.1px #3b72cc;text-decoration:underline;text-decoration-thickness:0.6px;text-underline-offset:0.3px;">LAS-673</span></div>
<div class="c" style="left:86.60px;top:292.42px;width:34.70px;height:10.42px;padding:0 1px;box-sizing:border-box;">New Lease</div>
<div class="c" style="left:122.40px;top:292.42px;width:34.70px;height:10.42px;padding:0 1px;box-sizing:border-box;">Gerald Ma</div>
<div class="c" style="left:158.20px;top:292.42px;width:34.70px;height:10.42px;padding:0 1px;box-sizing:border-box;">Gerald Ma</div>
<div class="c" style="left:194.00px;top:292.42px;width:34.80px;height:10.42px;padding:0 1px;box-sizing:border-box;">Medium</div>
<div class="c" style="left:229.90px;top:292.42px;width:35.10px;height:10.42px;padding:0 1px;box-sizing:border-box;">LAT Review</div>
<div class="c" style="left:302.20px;top:292.42px;width:61.80px;height:10.42px;text-align:right;font-size:7.55px;padding:0 1px;box-sizing:border-box;">2/03/2026 1:46</div>
<div class="c" style="left:365.10px;top:292.42px;width:61.40px;height:10.42px;text-align:right;font-size:7.55px;padding:0 1px;box-sizing:border-box;">3/03/2026 14:27</div>
<div class="c" style="left:427.60px;top:292.42px;width:45.90px;height:10.42px;text-align:right;font-size:7.55px;padding:0 1px;box-sizing:border-box;">5/03/2026</div>
<div class="c" style="left:15.10px;top:303.64px;width:34.60px;height:10.42px;padding:0 1px;box-sizing:border-box;">Lease Req</div>
<div class="c" style="left:50.80px;top:303.64px;width:34.70px;height:10.42px;padding:0 1px;box-sizing:border-box;"><span style="color:#3b72cc;-webkit-text-stroke:0.1px #3b72cc;text-decoration:underline;text-decoration-thickness:0.6px;text-underline-offset:0.3px;">LAS-672</span></div>
<div class="c" style="left:86.60px;top:303.64px;width:34.70px;height:10.42px;padding:0 1px;box-sizing:border-box;">New Lease</div>
<div class="c" style="left:122.40px;top:303.64px;width:34.70px;height:10.42px;padding:0 1px;box-sizing:border-box;">Roberta W</div>
<div class="c" style="left:158.20px;top:303.64px;width:34.70px;height:10.42px;padding:0 1px;box-sizing:border-box;">Gerald Ma</div>
<div class="c" style="left:194.00px;top:303.64px;width:34.80px;height:10.42px;padding:0 1px;box-sizing:border-box;">Medium</div>
<div class="c" style="left:229.90px;top:303.64px;width:35.10px;height:10.42px;padding:0 1px;box-sizing:border-box;">AM Review</div>
<div class="c" style="left:302.20px;top:303.64px;width:61.80px;height:10.42px;text-align:right;font-size:7.55px;padding:0 1px;box-sizing:border-box;">Mar-26</div>
<div class="c" style="left:365.10px;top:303.64px;width:61.40px;height:10.42px;text-align:right;font-size:7.55px;padding:0 1px;box-sizing:border-box;">5/03/2026 10:41</div>
<div class="c" style="left:427.60px;top:303.64px;width:45.90px;height:10.42px;text-align:right;font-size:7.55px;padding:0 1px;box-sizing:border-box;">5/03/2026</div>
<div class="c" style="left:15.10px;top:314.86px;width:34.60px;height:10.42px;padding:0 1px;box-sizing:border-box;">Lease Req</div>
<div class="c" style="left:50.80px;top:314.86px;width:34.70px;height:10.42px;padding:0 1px;box-sizing:border-box;"><span style="color:#3b72cc;-webkit-text-stroke:0.1px #3b72cc;text-decoration:underline;text-decoration-thickness:0.6px;text-underline-offset:0.3px;">LAS-671</span></div>
<div class="c" style="left:86.60px;top:314.86px;width:34.70px;height:10.42px;padding:0 1px;box-sizing:border-box;">New Lease</div>
<div class="c" style="left:122.40px;top:314.86px;width:34.70px;height:10.42px;padding:0 1px;box-sizing:border-box;">Gerald Ma</div>
<div class="c" style="left:158.20px;top:314.86px;width:34.70px;height:10.42px;padding:0 1px;box-sizing:border-box;">Gerald Ma</div>
<div class="c" style="left:194.00px;top:314.86px;width:34.80px;height:10.42px;padding:0 1px;box-sizing:border-box;">Medium</div>
<div class="c" style="left:229.90px;top:314.86px;width:35.10px;height:10.42px;padding:0 1px;box-sizing:border-box;">PM Validat</div>
<div class="c" style="left:302.20px;top:314.86px;width:61.80px;height:10.42px;text-align:right;font-size:7.55px;padding:0 1px;box-sizing:border-box;">Mar-26</div>
<div class="c" style="left:365.10px;top:314.86px;width:61.40px;height:10.42px;text-align:right;font-size:7.55px;padding:0 1px;box-sizing:border-box;">2/03/2026 9:11</div>
<div class="c" style="left:427.60px;top:314.86px;width:45.90px;height:10.42px;text-align:right;font-size:7.55px;padding:0 1px;box-sizing:border-box;">5/03/2026</div>
<div class="c" style="left:15.10px;top:326.08px;width:34.60px;height:10.42px;padding:0 1px;box-sizing:border-box;">Lease Req</div>
<div class="c" style="left:50.80px;top:326.08px;width:34.70px;height:10.42px;padding:0 1px;box-sizing:border-box;"><span style="color:#3b72cc;-webkit-text-stroke:0.1px #3b72cc;text-decoration:underline;text-decoration-thickness:0.6px;text-underline-offset:0.3px;">LAS-670</span></div>
<div class="c" style="left:86.60px;top:326.08px;width:34.70px;height:10.42px;padding:0 1px;box-sizing:border-box;">New Lease</div>
<div class="c" style="left:122.40px;top:326.08px;width:34.70px;height:10.42px;padding:0 1px;box-sizing:border-box;">Ronwenal</div>
<div class="c" style="left:158.20px;top:326.08px;width:34.70px;height:10.42px;padding:0 1px;box-sizing:border-box;">Ronwenal</div>
<div class="c" style="left:194.00px;top:326.08px;width:34.80px;height:10.42px;padding:0 1px;box-sizing:border-box;">Medium</div>
<div class="c" style="left:229.90px;top:326.08px;width:35.10px;height:10.42px;padding:0 1px;box-sizing:border-box;">AM Review</div>
<div class="c" style="left:302.20px;top:326.08px;width:61.80px;height:10.42px;text-align:right;font-size:7.55px;padding:0 1px;box-sizing:border-box;">27/02/2026 20:04</div>
<div class="c" style="left:365.10px;top:326.08px;width:61.40px;height:10.42px;text-align:right;font-size:7.55px;padding:0 1px;box-sizing:border-box;">5/03/2026 10:40</div>
<div class="c" style="left:427.60px;top:326.08px;width:45.90px;height:10.42px;text-align:right;font-size:7.55px;padding:0 1px;box-sizing:border-box;">3/03/2026</div>
<div class="c" style="left:15.10px;top:337.30px;width:34.60px;height:10.42px;padding:0 1px;box-sizing:border-box;">Lease Req</div>
<div class="c" style="left:50.80px;top:337.30px;width:34.70px;height:10.42px;padding:0 1px;box-sizing:border-box;"><span style="color:#3b72cc;-webkit-text-stroke:0.1px #3b72cc;text-decoration:underline;text-decoration-thickness:0.6px;text-underline-offset:0.3px;">LAS-669</span></div>
<div class="c" style="left:86.60px;top:337.30px;width:34.70px;height:10.42px;padding:0 1px;box-sizing:border-box;">New Lease</div>
<div class="c" style="left:122.40px;top:337.30px;width:34.70px;height:10.42px;padding:0 1px;box-sizing:border-box;">Gerald Ma</div>
<div class="c" style="left:158.20px;top:337.30px;width:34.70px;height:10.42px;padding:0 1px;box-sizing:border-box;">Gerald Ma</div>
<div class="c" style="left:194.00px;top:337.30px;width:34.80px;height:10.42px;padding:0 1px;box-sizing:border-box;">Medium</div>
<div class="c" style="left:229.90px;top:337.30px;width:35.10px;height:10.42px;padding:0 1px;box-sizing:border-box;">PM In-Rev</div>
<div class="c" style="left:302.20px;top:337.30px;width:61.80px;height:10.42px;text-align:right;font-size:7.55px;padding:0 1px;box-sizing:border-box;">27/02/2026 15:02</div>
<div class="c" style="left:365.10px;top:337.30px;width:61.40px;height:10.42px;text-align:right;font-size:7.55px;padding:0 1px;box-sizing:border-box;">3/03/2026 10:46</div>
<div class="c" style="left:427.60px;top:337.30px;width:45.90px;height:10.42px;text-align:right;font-size:7.55px;padding:0 1px;box-sizing:border-box;">3/03/2026</div>
<div class="c" style="left:15.10px;top:348.52px;width:34.60px;height:10.42px;padding:0 1px;box-sizing:border-box;">Lease Req</div>
<div class="c" style="left:50.80px;top:348.52px;width:34.70px;height:10.42px;padding:0 1px;box-sizing:border-box;"><span style="color:#3b72cc;-webkit-text-stroke:0.1px #3b72cc;text-decoration:underline;text-decoration-thickness:0.6px;text-underline-offset:0.3px;">LAS-668</span></div>
<div class="c" style="left:86.60px;top:348.52px;width:34.70px;height:10.42px;padding:0 1px;box-sizing:border-box;">New Lease</div>
<div class="c" style="left:122.40px;top:348.52px;width:34.70px;height:10.42px;padding:0 1px;box-sizing:border-box;">Luisito Re</div>
<div class="c" style="left:158.20px;top:348.52px;width:34.70px;height:10.42px;padding:0 1px;box-sizing:border-box;">Luisito Re</div>
<div class="c" style="left:194.00px;top:348.52px;width:34.80px;height:10.42px;padding:0 1px;box-sizing:border-box;">Medium</div>
<div class="c" style="left:229.90px;top:348.52px;width:35.10px;height:10.42px;padding:0 1px;box-sizing:border-box;">AM Review</div>
<div class="c" style="left:302.20px;top:348.52px;width:61.80px;height:10.42px;text-align:right;font-size:7.55px;padding:0 1px;box-sizing:border-box;">26/02/2026 15:46</div>
<div class="c" style="left:365.10px;top:348.52px;width:61.40px;height:10.42px;text-align:right;font-size:7.55px;padding:0 1px;box-sizing:border-box;">3/03/2026 12:18</div>
<div class="c" style="left:427.60px;top:348.52px;width:45.90px;height:10.42px;text-align:right;font-size:7.55px;padding:0 1px;box-sizing:border-box;">2/03/2026</div>
<div class="c" style="left:15.10px;top:359.74px;width:34.60px;height:10.42px;padding:0 1px;box-sizing:border-box;">Lease Req</div>
<div class="c" style="left:50.80px;top:359.74px;width:34.70px;height:10.42px;padding:0 1px;box-sizing:border-box;"><span style="color:#3b72cc;-webkit-text-stroke:0.1px #3b72cc;text-decoration:underline;text-decoration-thickness:0.6px;text-underline-offset:0.3px;">LAS-667</span></div>
<div class="c" style="left:86.60px;top:359.74px;width:34.70px;height:10.42px;padding:0 1px;box-sizing:border-box;">Extension</div>
<div class="c" style="left:122.40px;top:359.74px;width:34.70px;height:10.42px;padding:0 1px;box-sizing:border-box;">King Josep</div>
<div class="c" style="left:158.20px;top:359.74px;width:34.70px;height:10.42px;padding:0 1px;box-sizing:border-box;">King Josep</div>
<div class="c" style="left:194.00px;top:359.74px;width:34.80px;height:10.42px;padding:0 1px;box-sizing:border-box;">Medium</div>
<div class="c" style="left:229.90px;top:359.74px;width:35.10px;height:10.42px;padding:0 1px;box-sizing:border-box;">PM Validat</div>
<div class="c" style="left:302.20px;top:359.74px;width:61.80px;height:10.42px;text-align:right;font-size:7.55px;padding:0 1px;box-sizing:border-box;">25/02/2026 20:09</div>
<div class="c" style="left:365.10px;top:359.74px;width:61.40px;height:10.42px;text-align:right;font-size:7.55px;padding:0 1px;box-sizing:border-box;">25/02/2026 20:30</div>
<div class="c" style="left:427.60px;top:359.74px;width:45.90px;height:10.42px;text-align:right;font-size:7.55px;padding:0 1px;box-sizing:border-box;">27/02/2026</div>
<div class="c" style="left:15.10px;top:370.96px;width:34.60px;height:10.42px;padding:0 1px;box-sizing:border-box;">Lease Req</div>
<div class="c" style="left:50.80px;top:370.96px;width:34.70px;height:10.42px;padding:0 1px;box-sizing:border-box;"><span style="color:#3b72cc;-webkit-text-stroke:0.1px #3b72cc;text-decoration:underline;text-decoration-thickness:0.6px;text-underline-offset:0.3px;">LAS-666</span></div>
<div class="c" style="left:86.60px;top:370.96px;width:34.70px;height:10.42px;padding:0 1px;box-sizing:border-box;">Extension</div>
<div class="c" style="left:122.40px;top:370.96px;width:34.70px;height:10.42px;padding:0 1px;box-sizing:border-box;">King Josep</div>
<div class="c" style="left:158.20px;top:370.96px;width:34.70px;height:10.42px;padding:0 1px;box-sizing:border-box;">King Josep</div>
<div class="c" style="left:194.00px;top:370.96px;width:34.80px;height:10.42px;padding:0 1px;box-sizing:border-box;">Medium</div>
<div class="c" style="left:229.90px;top:370.96px;width:35.10px;height:10.42px;padding:0 1px;box-sizing:border-box;">LAT Review</div>
<div class="c" style="left:302.20px;top:370.96px;width:61.80px;height:10.42px;text-align:right;font-size:7.55px;padding:0 1px;box-sizing:border-box;">25/02/2026 17:30</div>
<div class="c" style="left:365.10px;top:370.96px;width:61.40px;height:10.42px;text-align:right;font-size:7.55px;padding:0 1px;box-sizing:border-box;">2/03/2026 17:07</div>
<div class="c" style="left:427.60px;top:370.96px;width:45.90px;height:10.42px;text-align:right;font-size:7.55px;padding:0 1px;box-sizing:border-box;">27/02/2026</div>
<div class="c" style="left:15.10px;top:382.18px;width:34.60px;height:10.42px;padding:0 1px;box-sizing:border-box;">Lease Req</div>
<div class="c" style="left:50.80px;top:382.18px;width:34.70px;height:10.42px;padding:0 1px;box-sizing:border-box;"><span style="color:#3b72cc;-webkit-text-stroke:0.1px #3b72cc;text-decoration:underline;text-decoration-thickness:0.6px;text-underline-offset:0.3px;">LAS-665</span></div>
<div class="c" style="left:86.60px;top:382.18px;width:34.70px;height:10.42px;padding:0 1px;box-sizing:border-box;">Renewal_</div>
<div class="c" style="left:122.40px;top:382.18px;width:34.70px;height:10.42px;padding:0 1px;box-sizing:border-box;">King Josep</div>
<div class="c" style="left:158.20px;top:382.18px;width:34.70px;height:10.42px;padding:0 1px;box-sizing:border-box;">King Josep</div>
<div class="c" style="left:194.00px;top:382.18px;width:34.80px;height:10.42px;padding:0 1px;box-sizing:border-box;">Medium</div>
<div class="c" style="left:229.90px;top:382.18px;width:35.10px;height:10.42px;padding:0 1px;box-sizing:border-box;">PM In-Rev</div>
<div class="c" style="left:302.20px;top:382.18px;width:61.80px;height:10.42px;text-align:right;font-size:7.55px;padding:0 1px;box-sizing:border-box;">25/02/2026 17:02</div>
<div class="c" style="left:365.10px;top:382.18px;width:61.40px;height:10.42px;text-align:right;font-size:7.55px;padding:0 1px;box-sizing:border-box;">26/02/2026 13:17</div>
<div class="c" style="left:427.60px;top:382.18px;width:45.90px;height:10.42px;text-align:right;font-size:7.55px;padding:0 1px;box-sizing:border-box;">27/02/2026</div>
<div class="c" style="left:15.10px;top:393.40px;width:34.60px;height:10.42px;padding:0 1px;box-sizing:border-box;">Lease Req</div>
<div class="c" style="left:50.80px;top:393.40px;width:34.70px;height:10.42px;padding:0 1px;box-sizing:border-box;"><span style="color:#3b72cc;-webkit-text-stroke:0.1px #3b72cc;text-decoration:underline;text-decoration-thickness:0.6px;text-underline-offset:0.3px;">LAS-659</span></div>
<div class="c" style="left:86.60px;top:393.40px;width:34.70px;height:10.42px;padding:0 1px;box-sizing:border-box;">New Lease</div>
<div class="c" style="left:122.40px;top:393.40px;width:34.70px;height:10.42px;padding:0 1px;box-sizing:border-box;">Ronwenal</div>
<div class="c" style="left:158.20px;top:393.40px;width:34.70px;height:10.42px;padding:0 1px;box-sizing:border-box;">Ronwenal</div>
<div class="c" style="left:194.00px;top:393.40px;width:34.80px;height:10.42px;padding:0 1px;box-sizing:border-box;">Medium</div>
<div class="c" style="left:229.90px;top:393.40px;width:35.10px;height:10.42px;padding:0 1px;box-sizing:border-box;">PM In-Rev</div>
<div class="c" style="left:302.20px;top:393.40px;width:61.80px;height:10.42px;text-align:right;font-size:7.55px;padding:0 1px;box-sizing:border-box;">19/02/2026 18:15</div>
<div class="c" style="left:365.10px;top:393.40px;width:61.40px;height:10.42px;text-align:right;font-size:7.55px;padding:0 1px;box-sizing:border-box;">20/02/2026 12:26</div>
<div class="c" style="left:427.60px;top:393.40px;width:45.90px;height:10.42px;text-align:right;font-size:7.55px;padding:0 1px;box-sizing:border-box;">23/02/2026</div>
<div class="c" style="left:15.10px;top:404.62px;width:34.60px;height:10.42px;padding:0 1px;box-sizing:border-box;">Lease Req</div>
<div class="c" style="left:50.80px;top:404.62px;width:34.70px;height:10.42px;padding:0 1px;box-sizing:border-box;"><span style="color:#3b72cc;-webkit-text-stroke:0.1px #3b72cc;text-decoration:underline;text-decoration-thickness:0.6px;text-underline-offset:0.3px;">LAS-658</span></div>
<div class="c" style="left:86.60px;top:404.62px;width:34.70px;height:10.42px;padding:0 1px;box-sizing:border-box;">Extension</div>
<div class="c" style="left:122.40px;top:404.62px;width:34.70px;height:10.42px;padding:0 1px;box-sizing:border-box;">Ronwenal</div>
<div class="c" style="left:158.20px;top:404.62px;width:34.70px;height:10.42px;padding:0 1px;box-sizing:border-box;">Ronwenal</div>
<div class="c" style="left:194.00px;top:404.62px;width:34.80px;height:10.42px;padding:0 1px;box-sizing:border-box;">Medium</div>
<div class="c" style="left:229.90px;top:404.62px;width:35.10px;height:10.42px;padding:0 1px;box-sizing:border-box;">PM In-Rev</div>
<div class="c" style="left:302.20px;top:404.62px;width:61.80px;height:10.42px;text-align:right;font-size:7.55px;padding:0 1px;box-sizing:border-box;">18/02/2026 20:31</div>
<div class="c" style="left:365.10px;top:404.62px;width:61.40px;height:10.42px;text-align:right;font-size:7.55px;padding:0 1px;box-sizing:border-box;">19/02/2026 10:48</div>
<div class="c" style="left:427.60px;top:404.62px;width:45.90px;height:10.42px;text-align:right;font-size:7.55px;padding:0 1px;box-sizing:border-box;">20/02/2026</div>
<div class="c" style="left:15.10px;top:415.84px;width:34.60px;height:10.42px;padding:0 1px;box-sizing:border-box;">Lease Req</div>
<div class="c" style="left:50.80px;top:415.84px;width:34.70px;height:10.42px;padding:0 1px;box-sizing:border-box;"><span style="color:#3b72cc;-webkit-text-stroke:0.1px #3b72cc;text-decoration:underline;text-decoration-thickness:0.6px;text-underline-offset:0.3px;">LAS-657</span></div>
<div class="c" style="left:86.60px;top:415.84px;width:34.70px;height:10.42px;padding:0 1px;box-sizing:border-box;">New Lease</div>
<div class="c" style="left:122.40px;top:415.84px;width:34.70px;height:10.42px;padding:0 1px;box-sizing:border-box;">Gerald Ma</div>
<div class="c" style="left:158.20px;top:415.84px;width:34.70px;height:10.42px;padding:0 1px;box-sizing:border-box;">Gerald Ma</div>
<div class="c" style="left:194.00px;top:415.84px;width:34.80px;height:10.42px;padding:0 1px;box-sizing:border-box;">Medium</div>
<div class="c" style="left:229.90px;top:415.84px;width:35.10px;height:10.42px;padding:0 1px;box-sizing:border-box;">PM Validat</div>
<div class="c" style="left:302.20px;top:415.84px;width:61.80px;height:10.42px;text-align:right;font-size:7.55px;padding:0 1px;box-sizing:border-box;">17/02/2026 3:49</div>
<div class="c" style="left:365.10px;top:415.84px;width:61.40px;height:10.42px;text-align:right;font-size:7.55px;padding:0 1px;box-sizing:border-box;">17/02/2026 3:50</div>
<div class="c" style="left:427.60px;top:415.84px;width:45.90px;height:10.42px;text-align:right;font-size:7.55px;padding:0 1px;box-sizing:border-box;">19/02/2026</div>
<div class="c" style="left:15.10px;top:427.06px;width:34.60px;height:10.42px;padding:0 1px;box-sizing:border-box;">Lease Req</div>
<div class="c" style="left:50.80px;top:427.06px;width:34.70px;height:10.42px;padding:0 1px;box-sizing:border-box;"><span style="color:#3b72cc;-webkit-text-stroke:0.1px #3b72cc;text-decoration:underline;text-decoration-thickness:0.6px;text-underline-offset:0.3px;">LAS-656</span></div>
<div class="c" style="left:86.60px;top:427.06px;width:34.70px;height:10.42px;padding:0 1px;box-sizing:border-box;">New Lease</div>
<div class="c" style="left:122.40px;top:427.06px;width:34.70px;height:10.42px;padding:0 1px;box-sizing:border-box;">Gerald Ma</div>
<div class="c" style="left:158.20px;top:427.06px;width:34.70px;height:10.42px;padding:0 1px;box-sizing:border-box;">Gerald Ma</div>
<div class="c" style="left:194.00px;top:427.06px;width:34.80px;height:10.42px;padding:0 1px;box-sizing:border-box;">Medium</div>
<div class="c" style="left:229.90px;top:427.06px;width:35.10px;height:10.42px;padding:0 1px;box-sizing:border-box;">Bank Guar</div>
<div class="c" style="left:302.20px;top:427.06px;width:61.80px;height:10.42px;text-align:right;font-size:7.55px;padding:0 1px;box-sizing:border-box;">17/02/2026 1:17</div>
<div class="c" style="left:365.10px;top:427.06px;width:61.40px;height:10.42px;text-align:right;font-size:7.55px;padding:0 1px;box-sizing:border-box;">5/03/2026 16:52</div>
<div class="c" style="left:427.60px;top:427.06px;width:45.90px;height:10.42px;text-align:right;font-size:7.55px;padding:0 1px;box-sizing:border-box;">18/02/2026</div>
<div class="c" style="left:15.10px;top:438.28px;width:34.60px;height:10.42px;padding:0 1px;box-sizing:border-box;">Lease Req</div>
<div class="c" style="left:50.80px;top:438.28px;width:34.70px;height:10.42px;padding:0 1px;box-sizing:border-box;"><span style="color:#3b72cc;-webkit-text-stroke:0.1px #3b72cc;text-decoration:underline;text-decoration-thickness:0.6px;text-underline-offset:0.3px;">LAS-655</span></div>
<div class="c" style="left:86.60px;top:438.28px;width:34.70px;height:10.42px;padding:0 1px;box-sizing:border-box;">Renewal - </div>
<div class="c" style="left:122.40px;top:438.28px;width:34.70px;height:10.42px;padding:0 1px;box-sizing:border-box;">Oscar Jae</div>
<div class="c" style="left:158.20px;top:438.28px;width:34.70px;height:10.42px;padding:0 1px;box-sizing:border-box;">Gerald Ma</div>
<div class="c" style="left:194.00px;top:438.28px;width:34.80px;height:10.42px;padding:0 1px;box-sizing:border-box;">Medium</div>
<div class="c" style="left:229.90px;top:438.28px;width:35.10px;height:10.42px;padding:0 1px;box-sizing:border-box;">Corp AP</div>
<div class="c" style="left:302.20px;top:438.28px;width:61.80px;height:10.42px;text-align:right;font-size:7.55px;padding:0 1px;box-sizing:border-box;">16/02/2026 20:57</div>
<div class="c" style="left:365.10px;top:438.28px;width:61.40px;height:10.42px;text-align:right;font-size:7.55px;padding:0 1px;box-sizing:border-box;">5/03/2026 12:09</div>
<div class="c" style="left:427.60px;top:438.28px;width:45.90px;height:10.42px;text-align:right;font-size:7.55px;padding:0 1px;box-sizing:border-box;">18/02/2026</div>
<div class="c" style="left:15.10px;top:449.50px;width:34.60px;height:10.42px;padding:0 1px;box-sizing:border-box;">Lease Req</div>
<div class="c" style="left:50.80px;top:449.50px;width:34.70px;height:10.42px;padding:0 1px;box-sizing:border-box;"><span style="color:#3b72cc;-webkit-text-stroke:0.1px #3b72cc;text-decoration:underline;text-decoration-thickness:0.6px;text-underline-offset:0.3px;">LAS-654</span></div>
<div class="c" style="left:86.60px;top:449.50px;width:34.70px;height:10.42px;padding:0 1px;box-sizing:border-box;">New Lease</div>
<div class="c" style="left:122.40px;top:449.50px;width:34.70px;height:10.42px;padding:0 1px;box-sizing:border-box;">Gerald Ma</div>
<div class="c" style="left:158.20px;top:449.50px;width:34.70px;height:10.42px;padding:0 1px;box-sizing:border-box;">Gerald Ma</div>
<div class="c" style="left:194.00px;top:449.50px;width:34.80px;height:10.42px;padding:0 1px;box-sizing:border-box;">Medium</div>
<div class="c" style="left:229.90px;top:449.50px;width:35.10px;height:10.42px;padding:0 1px;box-sizing:border-box;">PM In-Rev</div>
<div class="c" style="left:302.20px;top:449.50px;width:61.80px;height:10.42px;text-align:right;font-size:7.55px;padding:0 1px;box-sizing:border-box;">16/02/2026 18:58</div>
<div class="c" style="left:365.10px;top:449.50px;width:61.40px;height:10.42px;text-align:right;font-size:7.55px;padding:0 1px;box-sizing:border-box;">17/02/2026 12:00</div>
<div class="c" style="left:427.60px;top:449.50px;width:45.90px;height:10.42px;text-align:right;font-size:7.55px;padding:0 1px;box-sizing:border-box;">18/02/2026</div>
<div class="c" style="left:15.10px;top:460.72px;width:34.60px;height:10.42px;padding:0 1px;box-sizing:border-box;">Lease Req</div>
<div class="c" style="left:50.80px;top:460.72px;width:34.70px;height:10.42px;padding:0 1px;box-sizing:border-box;"><span style="color:#3b72cc;-webkit-text-stroke:0.1px #3b72cc;text-decoration:underline;text-decoration-thickness:0.6px;text-underline-offset:0.3px;">LAS-653</span></div>
<div class="c" style="left:86.60px;top:460.72px;width:34.70px;height:10.42px;padding:0 1px;box-sizing:border-box;">Renewal_</div>
<div class="c" style="left:122.40px;top:460.72px;width:34.70px;height:10.42px;padding:0 1px;box-sizing:border-box;">Roberta W</div>
<div class="c" style="left:158.20px;top:460.72px;width:34.70px;height:10.42px;padding:0 1px;box-sizing:border-box;">King Josep</div>
<div class="c" style="left:194.00px;top:460.72px;width:34.80px;height:10.42px;padding:0 1px;box-sizing:border-box;">Medium</div>
<div class="c" style="left:229.90px;top:460.72px;width:35.10px;height:10.42px;padding:0 1px;box-sizing:border-box;">AM Review</div>
<div class="c" style="left:302.20px;top:460.72px;width:61.80px;height:10.42px;text-align:right;font-size:7.55px;padding:0 1px;box-sizing:border-box;">13/02/2026 21:34</div>
<div class="c" style="left:365.10px;top:460.72px;width:61.40px;height:10.42px;text-align:right;font-size:7.55px;padding:0 1px;box-sizing:border-box;">5/03/2026 11:51</div>
<div class="c" style="left:427.60px;top:460.72px;width:45.90px;height:10.42px;text-align:right;font-size:7.55px;padding:0 1px;box-sizing:border-box;">17/02/2026</div>
<div class="r" style="left:797.00px;top:157.40px;width:12.20px;height:314.60px;background:#474747;"></div>
<div class="r" style="left:798.30px;top:157.40px;width:9.70px;height:314.60px;background:#383838;border-radius:4.9px 4.9px 0 0;"></div>
<svg class="r" style="left:800.30px;top:160.20px;width:5.50px;height:3.80px" viewBox="0 0 5.5 3.8"><path d="M0.1 3.7 L2.75 0.1 L5.4 3.7Z" fill="#e4e4e4"/></svg>
<div class="r" style="left:800.30px;top:166.50px;width:5.30px;height:76.50px;background:#c4c4c4;border-radius:2.65px;"></div>
<div class="r" style="left:809.20px;top:157.40px;width:0.80px;height:314.60px;background:#484848;"></div>
<div class="r" style="left:810.00px;top:157.40px;width:189.00px;height:314.60px;background:#525252;"></div>
<div class="t" style="left:817.00px;top:166.27px;font-size:9.40px;line-height:9.40px;color:#f4f4f4;transform:scaleX(0.9393);transform-origin:0 50%;-webkit-text-stroke:0.3px #f4f4f4;">New Office Add-in</div>
<svg class="r" style="left:969.70px;top:167.80px;width:7.70px;height:5.80px" viewBox="0 0 7.7 5.8"><path d="M0.4 0.5 L3.85 5.2 L7.3 0.5" stroke="#d8d8d8" stroke-width="0.8" fill="none"/></svg>
<svg class="r" style="left:988.50px;top:167.20px;width:6.50px;height:6.50px" viewBox="0 0 6.5 6.5"><path d="M0.4 0.4 L6.1 6.1 M6.1 0.4 L0.4 6.1" stroke="#d8d8d8" stroke-width="0.8"/></svg>
<svg class="r" style="left:817.00px;top:186.50px;width:27.20px;height:27.00px" viewBox="0 0 256 256"><defs><linearGradient id="jga" x1="0.98" y1="0.0" x2="0.59" y2="0.41"><stop offset="0.18" stop-color="#0052cc"/><stop offset="1" stop-color="#2684ff"/></linearGradient><linearGradient id="jgb" x1="0.98" y1="0.0" x2="0.59" y2="0.41"><stop offset="0.18" stop-color="#0052cc"/><stop offset="1" stop-color="#2684ff"/></linearGradient></defs><path d="M244.658 0H121.707a55.502 55.502 0 0 0 55.502 55.502h22.649V77.37c.02 30.625 24.841 55.447 55.466 55.467V10.666C255.324 4.777 250.55 0 244.658 0z" fill="#2684ff"/><path d="M183.822 61.262H60.872c.019 30.625 24.84 55.447 55.466 55.467h22.649v21.938c.039 30.625 24.877 55.43 55.502 55.43V71.93c0-5.891-4.776-10.667-10.667-10.667z" fill="url(#jga)"/><path d="M122.951 122.489H0c0 30.653 24.85 55.502 55.502 55.502h22.72v21.867c.02 30.597 24.798 55.408 55.396 55.466V133.156c0-5.891-4.776-10.667-10.667-10.667z" fill="url(#jgb)"/></svg>
<div class="t" style="left:855.10px;top:187.97px;font-size:9.40px;line-height:9.40px;color:#d6d6d6;transform:scaleX(0.8749);transform-origin:0 50%;">Jira Cloud for Excel</div>
<div class="t" style="left:855.10px;top:201.86px;font-size:6.90px;line-height:6.90px;color:#d6d6d6;transform:scaleX(0.9686);transform-origin:0 50%;">Atlassian.com</div>
<div class="t" style="left:817.60px;top:227.50px;font-size:6.80px;line-height:6.80px;color:#f4f4f4;transform:scaleX(0.9069);transform-origin:0 50%;-webkit-text-stroke:0.35px #f4f4f4;">License terms, Privacy policy and Permissions</div>
<div class="t" style="left:817.60px;top:244.60px;font-size:6.80px;line-height:6.80px;color:#ececec;transform:scaleX(0.9042);transform-origin:0 50%;-webkit-text-stroke:0.15px #ececec;">This add-in is from the Office Store and adds new capabilities</div>
<div class="t" style="left:817.60px;top:252.70px;font-size:6.80px;line-height:6.80px;color:#ececec;transform:scaleX(0.9237);transform-origin:0 50%;-webkit-text-stroke:0.15px #ececec;">to Office. With add-ins, you can optimize your workflow, use</div>
<div class="t" style="left:817.60px;top:260.80px;font-size:6.80px;line-height:6.80px;color:#ececec;transform:scaleX(0.9129);transform-origin:0 50%;-webkit-text-stroke:0.15px #ececec;">robust features, and more.</div>
<div class="t" style="left:817.60px;top:277.60px;font-size:6.80px;line-height:6.80px;color:#ececec;transform:scaleX(0.9030);transform-origin:0 50%;-webkit-text-stroke:0.15px #ececec;">By clicking Accept and Continue, you give this add-in</div>
<div class="t" style="left:817.60px;top:285.70px;font-size:6.80px;line-height:6.80px;color:#ececec;transform:scaleX(0.9105);transform-origin:0 50%;-webkit-text-stroke:0.15px #ececec;">permission to access contents of the files where it was</div>
<div class="t" style="left:817.60px;top:293.80px;font-size:6.80px;line-height:6.80px;color:#ececec;transform:scaleX(0.9086);transform-origin:0 50%;-webkit-text-stroke:0.15px #ececec;">included. You also agree to the add-in&#39;s <u style="color:#a9dcbc;-webkit-text-stroke:0.15px #a9dcbc;text-decoration-thickness:0.5px;">terms of use</u> and</div>
<div class="t" style="left:817.60px;top:301.90px;font-size:6.80px;line-height:6.80px;color:#ececec;transform:scaleX(0.9295);transform-origin:0 50%;-webkit-text-stroke:0.15px #ececec;"><u style="color:#a9dcbc;-webkit-text-stroke:0.15px #a9dcbc;text-decoration-thickness:0.5px;">privacy policy</u>, and understand that the rights to use it don&#39;t</div>
<div class="t" style="left:817.60px;top:310.00px;font-size:6.80px;line-height:6.80px;color:#ececec;transform:scaleX(0.9282);transform-origin:0 50%;-webkit-text-stroke:0.15px #ececec;">come from Microsoft, unless Microsoft provided it.</div>
<div class="r" style="left:817.20px;top:341.10px;width:90.70px;height:17.60px;background:#5fbb7f;border-radius:1.5px;"></div>
<div class="t" style="left:831.20px;top:347.30px;font-size:6.80px;line-height:6.80px;color:#1c2a20;">Accept and Continue</div>
<div class="r" style="left:915.70px;top:341.10px;width:58.80px;height:17.60px;background:#c4c4c4;border-radius:1.5px;"></div>
<div class="t" style="left:929.30px;top:347.30px;font-size:6.80px;line-height:6.80px;color:#222;transform:scaleX(0.9395);transform-origin:0 50%;">Get Details</div>
</body></html>
